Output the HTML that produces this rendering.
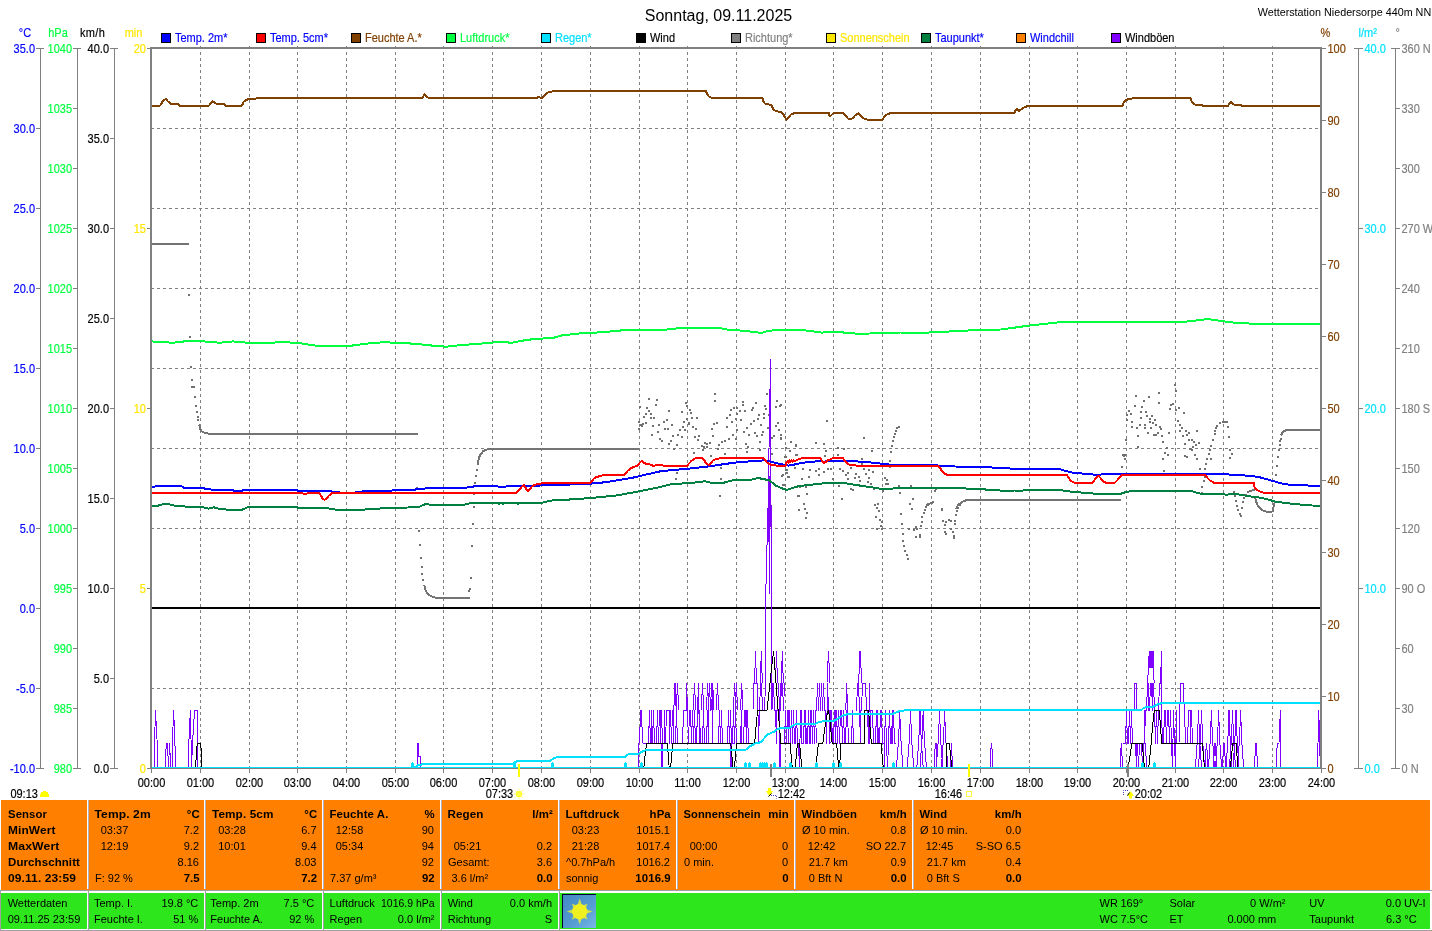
<!DOCTYPE html>
<html lang="de"><head><meta charset="utf-8"><title>Wetterstation Niedersorpe</title>
<style>html,body{margin:0;padding:0;background:#fff;overflow:hidden}body{width:1432px;height:931px;position:relative}</style></head>
<body>
<svg width="1432" height="931" viewBox="0 0 1432 931" style="position:absolute;left:0;top:0">
<defs><filter id="idf" filterUnits="userSpaceOnUse" x="0" y="0" width="1432" height="931" color-interpolation-filters="sRGB"><feOffset dx="0" dy="0"/></filter></defs>
<g filter="url(#idf)">
<rect width="1432" height="931" fill="#fff"/>
<text x="718.5" y="21" font-size="16" text-anchor="middle" font-family="Liberation Sans, Arial, sans-serif" fill="#000">Sonntag, 09.11.2025</text>
<text x="1431.2" y="16" font-size="11.01" text-anchor="end" textLength="173.5" lengthAdjust="spacingAndGlyphs" font-family="Liberation Sans, Arial, sans-serif" fill="#000">Wetterstation Niedersorpe 440m NN</text>
<rect x="161.5" y="33.5" width="9" height="9" fill="#0000ff" stroke="#000" stroke-width="1"/>
<text transform="scale(0.889,1)" x="196.85" y="42" font-size="12.375" font-family="Liberation Sans, Arial, sans-serif" fill="#0000ff" stroke="#0000ff" stroke-width="0.18">Temp. 2m*</text>
<rect x="256.5" y="33.5" width="9" height="9" fill="#ff0000" stroke="#000" stroke-width="1"/>
<text transform="scale(0.889,1)" x="303.71" y="42" font-size="12.375" font-family="Liberation Sans, Arial, sans-serif" fill="#0000ff" stroke="#0000ff" stroke-width="0.18">Temp. 5cm*</text>
<rect x="351.5" y="33.5" width="9" height="9" fill="#804000" stroke="#000" stroke-width="1"/>
<text transform="scale(0.889,1)" x="410.57" y="42" font-size="12.375" font-family="Liberation Sans, Arial, sans-serif" fill="#804000" stroke="#804000" stroke-width="0.18">Feuchte A.*</text>
<rect x="446.5" y="33.5" width="9" height="9" fill="#00ff40" stroke="#000" stroke-width="1"/>
<text transform="scale(0.889,1)" x="517.44" y="42" font-size="12.375" font-family="Liberation Sans, Arial, sans-serif" fill="#00ff40" stroke="#00ff40" stroke-width="0.18">Luftdruck*</text>
<rect x="541.5" y="33.5" width="9" height="9" fill="#00e0ff" stroke="#000" stroke-width="1"/>
<text transform="scale(0.889,1)" x="624.30" y="42" font-size="12.375" font-family="Liberation Sans, Arial, sans-serif" fill="#00e0ff" stroke="#00e0ff" stroke-width="0.18">Regen*</text>
<rect x="636.5" y="33.5" width="9" height="9" fill="#000000" stroke="#000" stroke-width="1"/>
<text transform="scale(0.889,1)" x="731.16" y="42" font-size="12.375" font-family="Liberation Sans, Arial, sans-serif" fill="#000000" stroke="#000000" stroke-width="0.18">Wind</text>
<rect x="731.5" y="33.5" width="9" height="9" fill="#808080" stroke="#000" stroke-width="1"/>
<text transform="scale(0.889,1)" x="838.02" y="42" font-size="12.375" font-family="Liberation Sans, Arial, sans-serif" fill="#808080" stroke="#808080" stroke-width="0.18">Richtung*</text>
<rect x="826.5" y="33.5" width="9" height="9" fill="#ffe600" stroke="#000" stroke-width="1"/>
<text transform="scale(0.889,1)" x="944.88" y="42" font-size="12.375" font-family="Liberation Sans, Arial, sans-serif" fill="#ffe600" stroke="#ffe600" stroke-width="0.18">Sonnenschein</text>
<rect x="921.5" y="33.5" width="9" height="9" fill="#008040" stroke="#000" stroke-width="1"/>
<text transform="scale(0.889,1)" x="1051.74" y="42" font-size="12.375" font-family="Liberation Sans, Arial, sans-serif" fill="#0000ff" stroke="#0000ff" stroke-width="0.18">Taupunkt*</text>
<rect x="1016.5" y="33.5" width="9" height="9" fill="#ff8000" stroke="#000" stroke-width="1"/>
<text transform="scale(0.889,1)" x="1158.61" y="42" font-size="12.375" font-family="Liberation Sans, Arial, sans-serif" fill="#0000ff" stroke="#0000ff" stroke-width="0.18">Windchill</text>
<rect x="1111.5" y="33.5" width="9" height="9" fill="#8000ff" stroke="#000" stroke-width="1"/>
<text transform="scale(0.889,1)" x="1265.47" y="42" font-size="12.375" font-family="Liberation Sans, Arial, sans-serif" fill="#000000" stroke="#000000" stroke-width="0.18">Windböen</text>
<g stroke="#808080" stroke-width="1" stroke-dasharray="3 3" shape-rendering="crispEdges">
<line x1="200.5" y1="46" x2="200.5" y2="767"/>
<line x1="249.5" y1="46" x2="249.5" y2="767"/>
<line x1="297.5" y1="46" x2="297.5" y2="767"/>
<line x1="346.5" y1="46" x2="346.5" y2="767"/>
<line x1="395.5" y1="46" x2="395.5" y2="767"/>
<line x1="443.5" y1="46" x2="443.5" y2="767"/>
<line x1="492.5" y1="46" x2="492.5" y2="767"/>
<line x1="541.5" y1="46" x2="541.5" y2="767"/>
<line x1="590.5" y1="46" x2="590.5" y2="767"/>
<line x1="639.5" y1="46" x2="639.5" y2="767"/>
<line x1="687.5" y1="46" x2="687.5" y2="767"/>
<line x1="736.5" y1="46" x2="736.5" y2="767"/>
<line x1="785.5" y1="46" x2="785.5" y2="767"/>
<line x1="833.5" y1="46" x2="833.5" y2="767"/>
<line x1="882.5" y1="46" x2="882.5" y2="767"/>
<line x1="931.5" y1="46" x2="931.5" y2="767"/>
<line x1="980.5" y1="46" x2="980.5" y2="767"/>
<line x1="1029.5" y1="46" x2="1029.5" y2="767"/>
<line x1="1077.5" y1="46" x2="1077.5" y2="767"/>
<line x1="1126.5" y1="46" x2="1126.5" y2="767"/>
<line x1="1175.5" y1="46" x2="1175.5" y2="767"/>
<line x1="1223.5" y1="46" x2="1223.5" y2="767"/>
<line x1="1272.5" y1="46" x2="1272.5" y2="767"/>
<line x1="151" y1="128.5" x2="1320" y2="128.5"/>
<line x1="151" y1="208.5" x2="1320" y2="208.5"/>
<line x1="151" y1="288.5" x2="1320" y2="288.5"/>
<line x1="151" y1="368.5" x2="1320" y2="368.5"/>
<line x1="151" y1="448.5" x2="1320" y2="448.5"/>
<line x1="151" y1="528.5" x2="1320" y2="528.5"/>
<line x1="151" y1="688.5" x2="1320" y2="688.5"/>
</g>
<line x1="152" y1="608" x2="1320" y2="608" stroke="#000" stroke-width="2" shape-rendering="crispEdges"/>
<g stroke="#808080" stroke-width="1" shape-rendering="crispEdges">
<line x1="40.5" y1="48" x2="40.5" y2="769"/>
<line x1="36" y1="48.5" x2="44" y2="48.5"/>
<line x1="36" y1="128.5" x2="40" y2="128.5"/>
<line x1="36" y1="208.5" x2="40" y2="208.5"/>
<line x1="36" y1="288.5" x2="40" y2="288.5"/>
<line x1="36" y1="368.5" x2="40" y2="368.5"/>
<line x1="36" y1="448.5" x2="40" y2="448.5"/>
<line x1="36" y1="528.5" x2="40" y2="528.5"/>
<line x1="36" y1="608.5" x2="40" y2="608.5"/>
<line x1="36" y1="688.5" x2="40" y2="688.5"/>
<line x1="36" y1="768.5" x2="44" y2="768.5"/>
</g>
<text transform="scale(0.889,1)" x="39.37" y="53" font-size="12.375" text-anchor="end" font-family="Liberation Sans, Arial, sans-serif" fill="#0000ff" stroke="#0000ff" stroke-width="0.18">35.0</text>
<text transform="scale(0.889,1)" x="39.37" y="133" font-size="12.375" text-anchor="end" font-family="Liberation Sans, Arial, sans-serif" fill="#0000ff" stroke="#0000ff" stroke-width="0.18">30.0</text>
<text transform="scale(0.889,1)" x="39.37" y="213" font-size="12.375" text-anchor="end" font-family="Liberation Sans, Arial, sans-serif" fill="#0000ff" stroke="#0000ff" stroke-width="0.18">25.0</text>
<text transform="scale(0.889,1)" x="39.37" y="293" font-size="12.375" text-anchor="end" font-family="Liberation Sans, Arial, sans-serif" fill="#0000ff" stroke="#0000ff" stroke-width="0.18">20.0</text>
<text transform="scale(0.889,1)" x="39.37" y="373" font-size="12.375" text-anchor="end" font-family="Liberation Sans, Arial, sans-serif" fill="#0000ff" stroke="#0000ff" stroke-width="0.18">15.0</text>
<text transform="scale(0.889,1)" x="39.37" y="453" font-size="12.375" text-anchor="end" font-family="Liberation Sans, Arial, sans-serif" fill="#0000ff" stroke="#0000ff" stroke-width="0.18">10.0</text>
<text transform="scale(0.889,1)" x="39.37" y="533" font-size="12.375" text-anchor="end" font-family="Liberation Sans, Arial, sans-serif" fill="#0000ff" stroke="#0000ff" stroke-width="0.18">5.0</text>
<text transform="scale(0.889,1)" x="39.37" y="613" font-size="12.375" text-anchor="end" font-family="Liberation Sans, Arial, sans-serif" fill="#0000ff" stroke="#0000ff" stroke-width="0.18">0.0</text>
<text transform="scale(0.889,1)" x="39.37" y="693" font-size="12.375" text-anchor="end" font-family="Liberation Sans, Arial, sans-serif" fill="#0000ff" stroke="#0000ff" stroke-width="0.18">-5.0</text>
<text transform="scale(0.889,1)" x="39.37" y="773" font-size="12.375" text-anchor="end" font-family="Liberation Sans, Arial, sans-serif" fill="#0000ff" stroke="#0000ff" stroke-width="0.18">-10.0</text>
<g stroke="#808080" stroke-width="1" shape-rendering="crispEdges">
<line x1="77.5" y1="48" x2="77.5" y2="769"/>
<line x1="73" y1="48.5" x2="81" y2="48.5"/>
<line x1="73" y1="108.5" x2="77" y2="108.5"/>
<line x1="73" y1="168.5" x2="77" y2="168.5"/>
<line x1="73" y1="228.5" x2="77" y2="228.5"/>
<line x1="73" y1="288.5" x2="77" y2="288.5"/>
<line x1="73" y1="348.5" x2="77" y2="348.5"/>
<line x1="73" y1="408.5" x2="77" y2="408.5"/>
<line x1="73" y1="468.5" x2="77" y2="468.5"/>
<line x1="73" y1="528.5" x2="77" y2="528.5"/>
<line x1="73" y1="588.5" x2="77" y2="588.5"/>
<line x1="73" y1="648.5" x2="77" y2="648.5"/>
<line x1="73" y1="708.5" x2="77" y2="708.5"/>
<line x1="73" y1="768.5" x2="81" y2="768.5"/>
</g>
<text transform="scale(0.889,1)" x="80.99" y="53" font-size="12.375" text-anchor="end" font-family="Liberation Sans, Arial, sans-serif" fill="#00ff40" stroke="#00ff40" stroke-width="0.18">1040</text>
<text transform="scale(0.889,1)" x="80.99" y="113" font-size="12.375" text-anchor="end" font-family="Liberation Sans, Arial, sans-serif" fill="#00ff40" stroke="#00ff40" stroke-width="0.18">1035</text>
<text transform="scale(0.889,1)" x="80.99" y="173" font-size="12.375" text-anchor="end" font-family="Liberation Sans, Arial, sans-serif" fill="#00ff40" stroke="#00ff40" stroke-width="0.18">1030</text>
<text transform="scale(0.889,1)" x="80.99" y="233" font-size="12.375" text-anchor="end" font-family="Liberation Sans, Arial, sans-serif" fill="#00ff40" stroke="#00ff40" stroke-width="0.18">1025</text>
<text transform="scale(0.889,1)" x="80.99" y="293" font-size="12.375" text-anchor="end" font-family="Liberation Sans, Arial, sans-serif" fill="#00ff40" stroke="#00ff40" stroke-width="0.18">1020</text>
<text transform="scale(0.889,1)" x="80.99" y="353" font-size="12.375" text-anchor="end" font-family="Liberation Sans, Arial, sans-serif" fill="#00ff40" stroke="#00ff40" stroke-width="0.18">1015</text>
<text transform="scale(0.889,1)" x="80.99" y="413" font-size="12.375" text-anchor="end" font-family="Liberation Sans, Arial, sans-serif" fill="#00ff40" stroke="#00ff40" stroke-width="0.18">1010</text>
<text transform="scale(0.889,1)" x="80.99" y="473" font-size="12.375" text-anchor="end" font-family="Liberation Sans, Arial, sans-serif" fill="#00ff40" stroke="#00ff40" stroke-width="0.18">1005</text>
<text transform="scale(0.889,1)" x="80.99" y="533" font-size="12.375" text-anchor="end" font-family="Liberation Sans, Arial, sans-serif" fill="#00ff40" stroke="#00ff40" stroke-width="0.18">1000</text>
<text transform="scale(0.889,1)" x="80.99" y="593" font-size="12.375" text-anchor="end" font-family="Liberation Sans, Arial, sans-serif" fill="#00ff40" stroke="#00ff40" stroke-width="0.18">995</text>
<text transform="scale(0.889,1)" x="80.99" y="653" font-size="12.375" text-anchor="end" font-family="Liberation Sans, Arial, sans-serif" fill="#00ff40" stroke="#00ff40" stroke-width="0.18">990</text>
<text transform="scale(0.889,1)" x="80.99" y="713" font-size="12.375" text-anchor="end" font-family="Liberation Sans, Arial, sans-serif" fill="#00ff40" stroke="#00ff40" stroke-width="0.18">985</text>
<text transform="scale(0.889,1)" x="80.99" y="773" font-size="12.375" text-anchor="end" font-family="Liberation Sans, Arial, sans-serif" fill="#00ff40" stroke="#00ff40" stroke-width="0.18">980</text>
<g stroke="#808080" stroke-width="1" shape-rendering="crispEdges">
<line x1="114.5" y1="48" x2="114.5" y2="769"/>
<line x1="110" y1="48.5" x2="118" y2="48.5"/>
<line x1="110" y1="138.5" x2="114" y2="138.5"/>
<line x1="110" y1="228.5" x2="114" y2="228.5"/>
<line x1="110" y1="318.5" x2="114" y2="318.5"/>
<line x1="110" y1="408.5" x2="114" y2="408.5"/>
<line x1="110" y1="498.5" x2="114" y2="498.5"/>
<line x1="110" y1="588.5" x2="114" y2="588.5"/>
<line x1="110" y1="678.5" x2="114" y2="678.5"/>
<line x1="110" y1="768.5" x2="118" y2="768.5"/>
</g>
<text transform="scale(0.889,1)" x="122.61" y="53" font-size="12.375" text-anchor="end" font-family="Liberation Sans, Arial, sans-serif" fill="#000000" stroke="#000000" stroke-width="0.18">40.0</text>
<text transform="scale(0.889,1)" x="122.61" y="143" font-size="12.375" text-anchor="end" font-family="Liberation Sans, Arial, sans-serif" fill="#000000" stroke="#000000" stroke-width="0.18">35.0</text>
<text transform="scale(0.889,1)" x="122.61" y="233" font-size="12.375" text-anchor="end" font-family="Liberation Sans, Arial, sans-serif" fill="#000000" stroke="#000000" stroke-width="0.18">30.0</text>
<text transform="scale(0.889,1)" x="122.61" y="323" font-size="12.375" text-anchor="end" font-family="Liberation Sans, Arial, sans-serif" fill="#000000" stroke="#000000" stroke-width="0.18">25.0</text>
<text transform="scale(0.889,1)" x="122.61" y="413" font-size="12.375" text-anchor="end" font-family="Liberation Sans, Arial, sans-serif" fill="#000000" stroke="#000000" stroke-width="0.18">20.0</text>
<text transform="scale(0.889,1)" x="122.61" y="503" font-size="12.375" text-anchor="end" font-family="Liberation Sans, Arial, sans-serif" fill="#000000" stroke="#000000" stroke-width="0.18">15.0</text>
<text transform="scale(0.889,1)" x="122.61" y="593" font-size="12.375" text-anchor="end" font-family="Liberation Sans, Arial, sans-serif" fill="#000000" stroke="#000000" stroke-width="0.18">10.0</text>
<text transform="scale(0.889,1)" x="122.61" y="683" font-size="12.375" text-anchor="end" font-family="Liberation Sans, Arial, sans-serif" fill="#000000" stroke="#000000" stroke-width="0.18">5.0</text>
<text transform="scale(0.889,1)" x="122.61" y="773" font-size="12.375" text-anchor="end" font-family="Liberation Sans, Arial, sans-serif" fill="#000000" stroke="#000000" stroke-width="0.18">0.0</text>
<g stroke="#808080" stroke-width="1" shape-rendering="crispEdges">
<line x1="147" y1="48.5" x2="150" y2="48.5"/>
<line x1="147" y1="228.5" x2="150" y2="228.5"/>
<line x1="147" y1="408.5" x2="150" y2="408.5"/>
<line x1="147" y1="588.5" x2="150" y2="588.5"/>
<line x1="147" y1="768.5" x2="150" y2="768.5"/>
</g>
<text transform="scale(0.889,1)" x="164.23" y="53" font-size="12.375" text-anchor="end" font-family="Liberation Sans, Arial, sans-serif" fill="#ffe600" stroke="#ffe600" stroke-width="0.18">20</text>
<text transform="scale(0.889,1)" x="164.23" y="233" font-size="12.375" text-anchor="end" font-family="Liberation Sans, Arial, sans-serif" fill="#ffe600" stroke="#ffe600" stroke-width="0.18">15</text>
<text transform="scale(0.889,1)" x="164.23" y="413" font-size="12.375" text-anchor="end" font-family="Liberation Sans, Arial, sans-serif" fill="#ffe600" stroke="#ffe600" stroke-width="0.18">10</text>
<text transform="scale(0.889,1)" x="164.23" y="593" font-size="12.375" text-anchor="end" font-family="Liberation Sans, Arial, sans-serif" fill="#ffe600" stroke="#ffe600" stroke-width="0.18">5</text>
<text transform="scale(0.889,1)" x="164.23" y="773" font-size="12.375" text-anchor="end" font-family="Liberation Sans, Arial, sans-serif" fill="#ffe600" stroke="#ffe600" stroke-width="0.18">0</text>
<text transform="scale(0.889,1)" x="28.12" y="37" font-size="12.375" text-anchor="middle" font-family="Liberation Sans, Arial, sans-serif" fill="#0000ff" stroke="#0000ff" stroke-width="0.18">°C</text>
<text transform="scale(0.889,1)" x="65.24" y="37" font-size="12.375" text-anchor="middle" font-family="Liberation Sans, Arial, sans-serif" fill="#00ff40" stroke="#00ff40" stroke-width="0.18">hPa</text>
<text transform="scale(0.889,1)" x="104.05" y="37" font-size="12.375" text-anchor="middle" letter-spacing="0.4" font-family="Liberation Sans, Arial, sans-serif" fill="#000" stroke="#000" stroke-width="0.18">km/h</text>
<text transform="scale(0.889,1)" x="150.17" y="37" font-size="12.375" text-anchor="middle" font-family="Liberation Sans, Arial, sans-serif" fill="#ffe600" stroke="#ffe600" stroke-width="0.18">min</text>
<g stroke="#808080" stroke-width="1" shape-rendering="crispEdges">
<line x1="1322" y1="48.5" x2="1326" y2="48.5"/>
<line x1="1322" y1="120.5" x2="1326" y2="120.5"/>
<line x1="1322" y1="192.5" x2="1326" y2="192.5"/>
<line x1="1322" y1="264.5" x2="1326" y2="264.5"/>
<line x1="1322" y1="336.5" x2="1326" y2="336.5"/>
<line x1="1322" y1="408.5" x2="1326" y2="408.5"/>
<line x1="1322" y1="480.5" x2="1326" y2="480.5"/>
<line x1="1322" y1="552.5" x2="1326" y2="552.5"/>
<line x1="1322" y1="624.5" x2="1326" y2="624.5"/>
<line x1="1322" y1="696.5" x2="1326" y2="696.5"/>
<line x1="1322" y1="768.5" x2="1326" y2="768.5"/>
</g>
<text transform="scale(0.889,1)" x="1493.25" y="53" font-size="12.375" font-family="Liberation Sans, Arial, sans-serif" fill="#804000" stroke="#804000" stroke-width="0.18">100</text>
<text transform="scale(0.889,1)" x="1493.25" y="125" font-size="12.375" font-family="Liberation Sans, Arial, sans-serif" fill="#804000" stroke="#804000" stroke-width="0.18">90</text>
<text transform="scale(0.889,1)" x="1493.25" y="197" font-size="12.375" font-family="Liberation Sans, Arial, sans-serif" fill="#804000" stroke="#804000" stroke-width="0.18">80</text>
<text transform="scale(0.889,1)" x="1493.25" y="269" font-size="12.375" font-family="Liberation Sans, Arial, sans-serif" fill="#804000" stroke="#804000" stroke-width="0.18">70</text>
<text transform="scale(0.889,1)" x="1493.25" y="341" font-size="12.375" font-family="Liberation Sans, Arial, sans-serif" fill="#804000" stroke="#804000" stroke-width="0.18">60</text>
<text transform="scale(0.889,1)" x="1493.25" y="413" font-size="12.375" font-family="Liberation Sans, Arial, sans-serif" fill="#804000" stroke="#804000" stroke-width="0.18">50</text>
<text transform="scale(0.889,1)" x="1493.25" y="485" font-size="12.375" font-family="Liberation Sans, Arial, sans-serif" fill="#804000" stroke="#804000" stroke-width="0.18">40</text>
<text transform="scale(0.889,1)" x="1493.25" y="557" font-size="12.375" font-family="Liberation Sans, Arial, sans-serif" fill="#804000" stroke="#804000" stroke-width="0.18">30</text>
<text transform="scale(0.889,1)" x="1493.25" y="629" font-size="12.375" font-family="Liberation Sans, Arial, sans-serif" fill="#804000" stroke="#804000" stroke-width="0.18">20</text>
<text transform="scale(0.889,1)" x="1493.25" y="701" font-size="12.375" font-family="Liberation Sans, Arial, sans-serif" fill="#804000" stroke="#804000" stroke-width="0.18">10</text>
<text transform="scale(0.889,1)" x="1493.25" y="773" font-size="12.375" font-family="Liberation Sans, Arial, sans-serif" fill="#804000" stroke="#804000" stroke-width="0.18">0</text>
<g stroke="#808080" stroke-width="1" shape-rendering="crispEdges">
<line x1="1358.5" y1="48" x2="1358.5" y2="769"/>
<line x1="1354" y1="48.5" x2="1363" y2="48.5"/>
<line x1="1358" y1="228.5" x2="1363" y2="228.5"/>
<line x1="1358" y1="408.5" x2="1363" y2="408.5"/>
<line x1="1358" y1="588.5" x2="1363" y2="588.5"/>
<line x1="1354" y1="768.5" x2="1363" y2="768.5"/>
</g>
<text transform="scale(0.889,1)" x="1534.87" y="53" font-size="12.375" font-family="Liberation Sans, Arial, sans-serif" fill="#00e0ff" stroke="#00e0ff" stroke-width="0.18">40.0</text>
<text transform="scale(0.889,1)" x="1534.87" y="233" font-size="12.375" font-family="Liberation Sans, Arial, sans-serif" fill="#00e0ff" stroke="#00e0ff" stroke-width="0.18">30.0</text>
<text transform="scale(0.889,1)" x="1534.87" y="413" font-size="12.375" font-family="Liberation Sans, Arial, sans-serif" fill="#00e0ff" stroke="#00e0ff" stroke-width="0.18">20.0</text>
<text transform="scale(0.889,1)" x="1534.87" y="593" font-size="12.375" font-family="Liberation Sans, Arial, sans-serif" fill="#00e0ff" stroke="#00e0ff" stroke-width="0.18">10.0</text>
<text transform="scale(0.889,1)" x="1534.87" y="773" font-size="12.375" font-family="Liberation Sans, Arial, sans-serif" fill="#00e0ff" stroke="#00e0ff" stroke-width="0.18">0.0</text>
<g stroke="#808080" stroke-width="1" shape-rendering="crispEdges">
<line x1="1395.5" y1="48" x2="1395.5" y2="769"/>
<line x1="1391" y1="48.5" x2="1400" y2="48.5"/>
<line x1="1395" y1="108.5" x2="1400" y2="108.5"/>
<line x1="1395" y1="168.5" x2="1400" y2="168.5"/>
<line x1="1395" y1="228.5" x2="1400" y2="228.5"/>
<line x1="1395" y1="288.5" x2="1400" y2="288.5"/>
<line x1="1395" y1="348.5" x2="1400" y2="348.5"/>
<line x1="1395" y1="408.5" x2="1400" y2="408.5"/>
<line x1="1395" y1="468.5" x2="1400" y2="468.5"/>
<line x1="1395" y1="528.5" x2="1400" y2="528.5"/>
<line x1="1395" y1="588.5" x2="1400" y2="588.5"/>
<line x1="1395" y1="648.5" x2="1400" y2="648.5"/>
<line x1="1395" y1="708.5" x2="1400" y2="708.5"/>
<line x1="1391" y1="768.5" x2="1400" y2="768.5"/>
</g>
<text transform="scale(0.889,1)" x="1576.49" y="53" font-size="12.375" font-family="Liberation Sans, Arial, sans-serif" fill="#808080" stroke="#808080" stroke-width="0.18">360 N</text>
<text transform="scale(0.889,1)" x="1576.49" y="113" font-size="12.375" font-family="Liberation Sans, Arial, sans-serif" fill="#808080" stroke="#808080" stroke-width="0.18">330</text>
<text transform="scale(0.889,1)" x="1576.49" y="173" font-size="12.375" font-family="Liberation Sans, Arial, sans-serif" fill="#808080" stroke="#808080" stroke-width="0.18">300</text>
<text transform="scale(0.889,1)" x="1576.49" y="233" font-size="12.375" font-family="Liberation Sans, Arial, sans-serif" fill="#808080" stroke="#808080" stroke-width="0.18">270 W</text>
<text transform="scale(0.889,1)" x="1576.49" y="293" font-size="12.375" font-family="Liberation Sans, Arial, sans-serif" fill="#808080" stroke="#808080" stroke-width="0.18">240</text>
<text transform="scale(0.889,1)" x="1576.49" y="353" font-size="12.375" font-family="Liberation Sans, Arial, sans-serif" fill="#808080" stroke="#808080" stroke-width="0.18">210</text>
<text transform="scale(0.889,1)" x="1576.49" y="413" font-size="12.375" font-family="Liberation Sans, Arial, sans-serif" fill="#808080" stroke="#808080" stroke-width="0.18">180 S</text>
<text transform="scale(0.889,1)" x="1576.49" y="473" font-size="12.375" font-family="Liberation Sans, Arial, sans-serif" fill="#808080" stroke="#808080" stroke-width="0.18">150</text>
<text transform="scale(0.889,1)" x="1576.49" y="533" font-size="12.375" font-family="Liberation Sans, Arial, sans-serif" fill="#808080" stroke="#808080" stroke-width="0.18">120</text>
<text transform="scale(0.889,1)" x="1576.49" y="593" font-size="12.375" font-family="Liberation Sans, Arial, sans-serif" fill="#808080" stroke="#808080" stroke-width="0.18">90 O</text>
<text transform="scale(0.889,1)" x="1576.49" y="653" font-size="12.375" font-family="Liberation Sans, Arial, sans-serif" fill="#808080" stroke="#808080" stroke-width="0.18">60</text>
<text transform="scale(0.889,1)" x="1576.49" y="713" font-size="12.375" font-family="Liberation Sans, Arial, sans-serif" fill="#808080" stroke="#808080" stroke-width="0.18">30</text>
<text transform="scale(0.889,1)" x="1576.49" y="773" font-size="12.375" font-family="Liberation Sans, Arial, sans-serif" fill="#808080" stroke="#808080" stroke-width="0.18">0 N</text>
<text transform="scale(0.889,1)" x="1491.00" y="37" font-size="12.375" text-anchor="middle" font-family="Liberation Sans, Arial, sans-serif" fill="#804000" stroke="#804000" stroke-width="0.18">%</text>
<text transform="scale(0.889,1)" x="1528.12" y="37" font-size="12.375" font-family="Liberation Sans, Arial, sans-serif" fill="#00e0ff" stroke="#00e0ff" stroke-width="0.18">l/m²</text>
<text transform="scale(0.889,1)" x="1569.74" y="37" font-size="12.375" font-family="Liberation Sans, Arial, sans-serif" fill="#808080" stroke="#808080" stroke-width="0.18">°</text>
<g stroke="#808080" stroke-width="1" shape-rendering="crispEdges">
<line x1="151.5" y1="769" x2="151.5" y2="773"/>
<line x1="200.5" y1="769" x2="200.5" y2="773"/>
<line x1="249.5" y1="769" x2="249.5" y2="773"/>
<line x1="297.5" y1="769" x2="297.5" y2="773"/>
<line x1="346.5" y1="769" x2="346.5" y2="773"/>
<line x1="395.5" y1="769" x2="395.5" y2="773"/>
<line x1="443.5" y1="769" x2="443.5" y2="773"/>
<line x1="492.5" y1="769" x2="492.5" y2="773"/>
<line x1="541.5" y1="769" x2="541.5" y2="773"/>
<line x1="590.5" y1="769" x2="590.5" y2="773"/>
<line x1="639.5" y1="769" x2="639.5" y2="773"/>
<line x1="687.5" y1="769" x2="687.5" y2="773"/>
<line x1="736.5" y1="769" x2="736.5" y2="773"/>
<line x1="785.5" y1="769" x2="785.5" y2="773"/>
<line x1="833.5" y1="769" x2="833.5" y2="773"/>
<line x1="882.5" y1="769" x2="882.5" y2="773"/>
<line x1="931.5" y1="769" x2="931.5" y2="773"/>
<line x1="980.5" y1="769" x2="980.5" y2="773"/>
<line x1="1029.5" y1="769" x2="1029.5" y2="773"/>
<line x1="1077.5" y1="769" x2="1077.5" y2="773"/>
<line x1="1126.5" y1="769" x2="1126.5" y2="773"/>
<line x1="1175.5" y1="769" x2="1175.5" y2="773"/>
<line x1="1223.5" y1="769" x2="1223.5" y2="773"/>
<line x1="1272.5" y1="769" x2="1272.5" y2="773"/>
<line x1="1321.5" y1="769" x2="1321.5" y2="773"/>
</g>
<text transform="scale(0.889,1)" x="170.42" y="787" font-size="12.375" text-anchor="middle" font-family="Liberation Sans, Arial, sans-serif" fill="#000" stroke="#000" stroke-width="0.18">00:00</text>
<text transform="scale(0.889,1)" x="225.53" y="787" font-size="12.375" text-anchor="middle" font-family="Liberation Sans, Arial, sans-serif" fill="#000" stroke="#000" stroke-width="0.18">01:00</text>
<text transform="scale(0.889,1)" x="280.65" y="787" font-size="12.375" text-anchor="middle" font-family="Liberation Sans, Arial, sans-serif" fill="#000" stroke="#000" stroke-width="0.18">02:00</text>
<text transform="scale(0.889,1)" x="334.65" y="787" font-size="12.375" text-anchor="middle" font-family="Liberation Sans, Arial, sans-serif" fill="#000" stroke="#000" stroke-width="0.18">03:00</text>
<text transform="scale(0.889,1)" x="389.76" y="787" font-size="12.375" text-anchor="middle" font-family="Liberation Sans, Arial, sans-serif" fill="#000" stroke="#000" stroke-width="0.18">04:00</text>
<text transform="scale(0.889,1)" x="444.88" y="787" font-size="12.375" text-anchor="middle" font-family="Liberation Sans, Arial, sans-serif" fill="#000" stroke="#000" stroke-width="0.18">05:00</text>
<text transform="scale(0.889,1)" x="498.88" y="787" font-size="12.375" text-anchor="middle" font-family="Liberation Sans, Arial, sans-serif" fill="#000" stroke="#000" stroke-width="0.18">06:00</text>
<text transform="scale(0.889,1)" x="553.99" y="787" font-size="12.375" text-anchor="middle" font-family="Liberation Sans, Arial, sans-serif" fill="#000" stroke="#000" stroke-width="0.18">07:00</text>
<text transform="scale(0.889,1)" x="609.11" y="787" font-size="12.375" text-anchor="middle" font-family="Liberation Sans, Arial, sans-serif" fill="#000" stroke="#000" stroke-width="0.18">08:00</text>
<text transform="scale(0.889,1)" x="664.23" y="787" font-size="12.375" text-anchor="middle" font-family="Liberation Sans, Arial, sans-serif" fill="#000" stroke="#000" stroke-width="0.18">09:00</text>
<text transform="scale(0.889,1)" x="719.35" y="787" font-size="12.375" text-anchor="middle" font-family="Liberation Sans, Arial, sans-serif" fill="#000" stroke="#000" stroke-width="0.18">10:00</text>
<text transform="scale(0.889,1)" x="773.34" y="787" font-size="12.375" text-anchor="middle" font-family="Liberation Sans, Arial, sans-serif" fill="#000" stroke="#000" stroke-width="0.18">11:00</text>
<text transform="scale(0.889,1)" x="828.46" y="787" font-size="12.375" text-anchor="middle" font-family="Liberation Sans, Arial, sans-serif" fill="#000" stroke="#000" stroke-width="0.18">12:00</text>
<text transform="scale(0.889,1)" x="883.58" y="787" font-size="12.375" text-anchor="middle" font-family="Liberation Sans, Arial, sans-serif" fill="#000" stroke="#000" stroke-width="0.18">13:00</text>
<text transform="scale(0.889,1)" x="937.57" y="787" font-size="12.375" text-anchor="middle" font-family="Liberation Sans, Arial, sans-serif" fill="#000" stroke="#000" stroke-width="0.18">14:00</text>
<text transform="scale(0.889,1)" x="992.69" y="787" font-size="12.375" text-anchor="middle" font-family="Liberation Sans, Arial, sans-serif" fill="#000" stroke="#000" stroke-width="0.18">15:00</text>
<text transform="scale(0.889,1)" x="1047.81" y="787" font-size="12.375" text-anchor="middle" font-family="Liberation Sans, Arial, sans-serif" fill="#000" stroke="#000" stroke-width="0.18">16:00</text>
<text transform="scale(0.889,1)" x="1102.92" y="787" font-size="12.375" text-anchor="middle" font-family="Liberation Sans, Arial, sans-serif" fill="#000" stroke="#000" stroke-width="0.18">17:00</text>
<text transform="scale(0.889,1)" x="1158.04" y="787" font-size="12.375" text-anchor="middle" font-family="Liberation Sans, Arial, sans-serif" fill="#000" stroke="#000" stroke-width="0.18">18:00</text>
<text transform="scale(0.889,1)" x="1212.04" y="787" font-size="12.375" text-anchor="middle" font-family="Liberation Sans, Arial, sans-serif" fill="#000" stroke="#000" stroke-width="0.18">19:00</text>
<text transform="scale(0.889,1)" x="1267.15" y="787" font-size="12.375" text-anchor="middle" font-family="Liberation Sans, Arial, sans-serif" fill="#000" stroke="#000" stroke-width="0.18">20:00</text>
<text transform="scale(0.889,1)" x="1322.27" y="787" font-size="12.375" text-anchor="middle" font-family="Liberation Sans, Arial, sans-serif" fill="#000" stroke="#000" stroke-width="0.18">21:00</text>
<text transform="scale(0.889,1)" x="1376.27" y="787" font-size="12.375" text-anchor="middle" font-family="Liberation Sans, Arial, sans-serif" fill="#000" stroke="#000" stroke-width="0.18">22:00</text>
<text transform="scale(0.889,1)" x="1431.38" y="787" font-size="12.375" text-anchor="middle" font-family="Liberation Sans, Arial, sans-serif" fill="#000" stroke="#000" stroke-width="0.18">23:00</text>
<text transform="scale(0.889,1)" x="1486.50" y="787" font-size="12.375" text-anchor="middle" font-family="Liberation Sans, Arial, sans-serif" fill="#000" stroke="#000" stroke-width="0.18">24:00</text>
<g fill="none" stroke-linejoin="round" shape-rendering="crispEdges">
<polyline points="152.0,243.7 189.0,243.7" stroke="#747474" stroke-width="2"/>
<polyline points="199.1,424.5 200.0,428.0 201.0,430.9 204.0,432.5 209.0,433.7 417.7,433.7" stroke="#747474" stroke-width="2"/>
<polyline points="424.2,584.6 425.1,588.5 426.0,591.4 428.0,594.0 430.9,596.2 434.8,597.5 469.6,597.5" stroke="#747474" stroke-width="2"/>
<polyline points="477.9,464.8 478.6,459.0 480.2,454.7 483.1,451.3 487.0,449.4 639.0,449.4" stroke="#747474" stroke-width="2"/>
<polyline points="956.0,509.0 958.0,505.0 962.0,502.0 966.0,500.2 1120.7,500.2" stroke="#747474" stroke-width="2"/>
<polyline points="1255.2,497.2 1256.1,501.5 1257.8,505.8 1260.4,508.9 1263.8,510.9 1268.1,512.0 1272.4,512.0" stroke="#747474" stroke-width="2"/>
<polyline points="1272.4,512.0 1273.3,507.5 1274.1,504.9 1274.7,502.0" stroke="#747474" stroke-width="2"/>
<polyline points="1247.5,492.4 1250.1,490.8 1253.5,490.3" stroke="#747474" stroke-width="2"/>
<polyline points="1281.0,435.3 1282.7,432.2 1285.3,430.5 1288.8,430.2 1320.0,430.2" stroke="#747474" stroke-width="2"/>
<polyline points="926.0,505.5 928.0,504.0 930.7,503.2 933.5,502.3" stroke="#747474" stroke-width="2"/>
</g>
<g fill="#707070" shape-rendering="crispEdges">
<rect x="188" y="294" width="2" height="2"/>
<rect x="189" y="336" width="2" height="2"/>
<rect x="190" y="366" width="2" height="2"/>
<rect x="191" y="379" width="2" height="2"/>
<rect x="191" y="386" width="2" height="2"/>
<rect x="193" y="386" width="2" height="2"/>
<rect x="194" y="396" width="2" height="2"/>
<rect x="195" y="405" width="2" height="2"/>
<rect x="196" y="411" width="2" height="2"/>
<rect x="197" y="416" width="2" height="2"/>
<rect x="197" y="419" width="2" height="2"/>
<rect x="416" y="487" width="2" height="2"/>
<rect x="417" y="506" width="2" height="2"/>
<rect x="418" y="530" width="2" height="2"/>
<rect x="419" y="544" width="2" height="2"/>
<rect x="420" y="557" width="2" height="2"/>
<rect x="421" y="566" width="2" height="2"/>
<rect x="421" y="573" width="2" height="2"/>
<rect x="422" y="579" width="2" height="2"/>
<rect x="468" y="590" width="2" height="2"/>
<rect x="469" y="588" width="2" height="2"/>
<rect x="470" y="577" width="2" height="2"/>
<rect x="471" y="545" width="2" height="2"/>
<rect x="472" y="523" width="2" height="2"/>
<rect x="473" y="506" width="2" height="2"/>
<rect x="473" y="493" width="2" height="2"/>
<rect x="474" y="482" width="2" height="2"/>
<rect x="475" y="475" width="2" height="2"/>
<rect x="476" y="469" width="2" height="2"/>
<rect x="648" y="398" width="2" height="2"/>
<rect x="656" y="399" width="2" height="2"/>
<rect x="655" y="404" width="2" height="2"/>
<rect x="639" y="406" width="2" height="2"/>
<rect x="646" y="407" width="2" height="2"/>
<rect x="648" y="410" width="2" height="2"/>
<rect x="645" y="413" width="2" height="2"/>
<rect x="650" y="413" width="2" height="2"/>
<rect x="643" y="416" width="2" height="2"/>
<rect x="650" y="417" width="2" height="2"/>
<rect x="653" y="417" width="2" height="2"/>
<rect x="668" y="410" width="2" height="2"/>
<rect x="638" y="421" width="2" height="2"/>
<rect x="642" y="423" width="2" height="2"/>
<rect x="645" y="422" width="2" height="2"/>
<rect x="663" y="421" width="2" height="2"/>
<rect x="666" y="419" width="2" height="2"/>
<rect x="652" y="425" width="2" height="2"/>
<rect x="658" y="424" width="2" height="2"/>
<rect x="671" y="424" width="2" height="2"/>
<rect x="664" y="428" width="2" height="2"/>
<rect x="667" y="428" width="2" height="2"/>
<rect x="657" y="431" width="2" height="2"/>
<rect x="651" y="434" width="2" height="2"/>
<rect x="672" y="435" width="2" height="2"/>
<rect x="677" y="434" width="2" height="2"/>
<rect x="681" y="436" width="2" height="2"/>
<rect x="659" y="438" width="2" height="2"/>
<rect x="661" y="440" width="2" height="2"/>
<rect x="670" y="440" width="2" height="2"/>
<rect x="668" y="443" width="2" height="2"/>
<rect x="676" y="444" width="2" height="2"/>
<rect x="673" y="448" width="2" height="2"/>
<rect x="681" y="411" width="2" height="2"/>
<rect x="685" y="402" width="2" height="2"/>
<rect x="686" y="405" width="2" height="2"/>
<rect x="689" y="409" width="2" height="2"/>
<rect x="690" y="412" width="2" height="2"/>
<rect x="691" y="417" width="2" height="2"/>
<rect x="696" y="417" width="2" height="2"/>
<rect x="686" y="418" width="2" height="2"/>
<rect x="683" y="421" width="2" height="2"/>
<rect x="688" y="422" width="2" height="2"/>
<rect x="688" y="423" width="2" height="2"/>
<rect x="682" y="426" width="2" height="2"/>
<rect x="692" y="426" width="2" height="2"/>
<rect x="695" y="428" width="2" height="2"/>
<rect x="679" y="429" width="2" height="2"/>
<rect x="684" y="429" width="2" height="2"/>
<rect x="694" y="436" width="2" height="2"/>
<rect x="698" y="435" width="2" height="2"/>
<rect x="697" y="439" width="2" height="2"/>
<rect x="693" y="452" width="2" height="2"/>
<rect x="714" y="393" width="2" height="2"/>
<rect x="714" y="400" width="2" height="2"/>
<rect x="713" y="423" width="2" height="2"/>
<rect x="716" y="422" width="2" height="2"/>
<rect x="711" y="428" width="2" height="2"/>
<rect x="712" y="435" width="2" height="2"/>
<rect x="704" y="442" width="2" height="2"/>
<rect x="706" y="443" width="2" height="2"/>
<rect x="709" y="442" width="2" height="2"/>
<rect x="701" y="445" width="2" height="2"/>
<rect x="703" y="446" width="2" height="2"/>
<rect x="706" y="446" width="2" height="2"/>
<rect x="702" y="449" width="2" height="2"/>
<rect x="718" y="444" width="2" height="2"/>
<rect x="721" y="441" width="2" height="2"/>
<rect x="724" y="440" width="2" height="2"/>
<rect x="717" y="448" width="2" height="2"/>
<rect x="710" y="455" width="2" height="2"/>
<rect x="724" y="453" width="2" height="2"/>
<rect x="728" y="438" width="2" height="2"/>
<rect x="732" y="434" width="2" height="2"/>
<rect x="735" y="438" width="2" height="2"/>
<rect x="726" y="426" width="2" height="2"/>
<rect x="731" y="421" width="2" height="2"/>
<rect x="735" y="418" width="2" height="2"/>
<rect x="726" y="417" width="2" height="2"/>
<rect x="729" y="414" width="2" height="2"/>
<rect x="730" y="409" width="2" height="2"/>
<rect x="733" y="407" width="2" height="2"/>
<rect x="736" y="407" width="2" height="2"/>
<rect x="739" y="410" width="2" height="2"/>
<rect x="736" y="413" width="2" height="2"/>
<rect x="742" y="401" width="2" height="2"/>
<rect x="742" y="404" width="2" height="2"/>
<rect x="744" y="410" width="2" height="2"/>
<rect x="740" y="419" width="2" height="2"/>
<rect x="736" y="429" width="2" height="2"/>
<rect x="743" y="431" width="2" height="2"/>
<rect x="746" y="427" width="2" height="2"/>
<rect x="748" y="434" width="2" height="2"/>
<rect x="750" y="423" width="2" height="2"/>
<rect x="753" y="420" width="2" height="2"/>
<rect x="757" y="418" width="2" height="2"/>
<rect x="758" y="414" width="2" height="2"/>
<rect x="751" y="409" width="2" height="2"/>
<rect x="752" y="407" width="2" height="2"/>
<rect x="755" y="402" width="2" height="2"/>
<rect x="764" y="405" width="2" height="2"/>
<rect x="765" y="408" width="2" height="2"/>
<rect x="763" y="413" width="2" height="2"/>
<rect x="763" y="417" width="2" height="2"/>
<rect x="760" y="424" width="2" height="2"/>
<rect x="762" y="431" width="2" height="2"/>
<rect x="761" y="434" width="2" height="2"/>
<rect x="756" y="435" width="2" height="2"/>
<rect x="754" y="432" width="2" height="2"/>
<rect x="759" y="441" width="2" height="2"/>
<rect x="745" y="443" width="2" height="2"/>
<rect x="747" y="446" width="2" height="2"/>
<rect x="746" y="451" width="2" height="2"/>
<rect x="759" y="449" width="2" height="2"/>
<rect x="766" y="393" width="2" height="2"/>
<rect x="768" y="414" width="2" height="2"/>
<rect x="769" y="409" width="2" height="2"/>
<rect x="769" y="425" width="2" height="2"/>
<rect x="767" y="427" width="2" height="2"/>
<rect x="776" y="400" width="2" height="2"/>
<rect x="775" y="406" width="2" height="2"/>
<rect x="779" y="405" width="2" height="2"/>
<rect x="777" y="422" width="2" height="2"/>
<rect x="775" y="425" width="2" height="2"/>
<rect x="778" y="429" width="2" height="2"/>
<rect x="773" y="435" width="2" height="2"/>
<rect x="771" y="437" width="2" height="2"/>
<rect x="780" y="434" width="2" height="2"/>
<rect x="780" y="438" width="2" height="2"/>
<rect x="790" y="441" width="2" height="2"/>
<rect x="795" y="445" width="2" height="2"/>
<rect x="789" y="450" width="2" height="2"/>
<rect x="796" y="454" width="2" height="2"/>
<rect x="771" y="453" width="2" height="2"/>
<rect x="785" y="456" width="2" height="2"/>
<rect x="794" y="467" width="2" height="2"/>
<rect x="786" y="469" width="2" height="2"/>
<rect x="786" y="472" width="2" height="2"/>
<rect x="781" y="475" width="2" height="2"/>
<rect x="788" y="476" width="2" height="2"/>
<rect x="784" y="484" width="2" height="2"/>
<rect x="798" y="485" width="2" height="2"/>
<rect x="720" y="467" width="2" height="2"/>
<rect x="720" y="478" width="2" height="2"/>
<rect x="676" y="472" width="2" height="2"/>
<rect x="675" y="478" width="2" height="2"/>
<rect x="719" y="495" width="2" height="2"/>
<rect x="798" y="495" width="2" height="2"/>
<rect x="640" y="424" width="2" height="2"/>
<rect x="638" y="428" width="2" height="2"/>
<rect x="641" y="425" width="2" height="2"/>
<rect x="780" y="404" width="2" height="2"/>
<rect x="780" y="434" width="2" height="2"/>
<rect x="780" y="437" width="2" height="2"/>
<rect x="826" y="420" width="2" height="2"/>
<rect x="790" y="441" width="2" height="2"/>
<rect x="795" y="444" width="2" height="2"/>
<rect x="815" y="442" width="2" height="2"/>
<rect x="823" y="443" width="2" height="2"/>
<rect x="785" y="447" width="2" height="2"/>
<rect x="789" y="450" width="2" height="2"/>
<rect x="795" y="454" width="2" height="2"/>
<rect x="825" y="450" width="2" height="2"/>
<rect x="824" y="455" width="2" height="2"/>
<rect x="837" y="447" width="2" height="2"/>
<rect x="843" y="448" width="2" height="2"/>
<rect x="837" y="454" width="2" height="2"/>
<rect x="863" y="437" width="2" height="2"/>
<rect x="871" y="450" width="2" height="2"/>
<rect x="861" y="458" width="2" height="2"/>
<rect x="811" y="457" width="2" height="2"/>
<rect x="784" y="456" width="2" height="2"/>
<rect x="782" y="474" width="2" height="2"/>
<rect x="787" y="476" width="2" height="2"/>
<rect x="785" y="469" width="2" height="2"/>
<rect x="794" y="467" width="2" height="2"/>
<rect x="802" y="468" width="2" height="2"/>
<rect x="809" y="469" width="2" height="2"/>
<rect x="808" y="476" width="2" height="2"/>
<rect x="801" y="478" width="2" height="2"/>
<rect x="815" y="470" width="2" height="2"/>
<rect x="818" y="468" width="2" height="2"/>
<rect x="818" y="474" width="2" height="2"/>
<rect x="823" y="471" width="2" height="2"/>
<rect x="827" y="468" width="2" height="2"/>
<rect x="830" y="468" width="2" height="2"/>
<rect x="832" y="478" width="2" height="2"/>
<rect x="839" y="468" width="2" height="2"/>
<rect x="842" y="470" width="2" height="2"/>
<rect x="845" y="474" width="2" height="2"/>
<rect x="847" y="472" width="2" height="2"/>
<rect x="847" y="478" width="2" height="2"/>
<rect x="850" y="467" width="2" height="2"/>
<rect x="855" y="473" width="2" height="2"/>
<rect x="854" y="477" width="2" height="2"/>
<rect x="858" y="476" width="2" height="2"/>
<rect x="859" y="480" width="2" height="2"/>
<rect x="861" y="463" width="2" height="2"/>
<rect x="863" y="468" width="2" height="2"/>
<rect x="865" y="473" width="2" height="2"/>
<rect x="868" y="469" width="2" height="2"/>
<rect x="872" y="471" width="2" height="2"/>
<rect x="868" y="477" width="2" height="2"/>
<rect x="867" y="481" width="2" height="2"/>
<rect x="870" y="483" width="2" height="2"/>
<rect x="873" y="488" width="2" height="2"/>
<rect x="782" y="484" width="2" height="2"/>
<rect x="799" y="486" width="2" height="2"/>
<rect x="805" y="486" width="2" height="2"/>
<rect x="828" y="482" width="2" height="2"/>
<rect x="838" y="485" width="2" height="2"/>
<rect x="845" y="482" width="2" height="2"/>
<rect x="850" y="488" width="2" height="2"/>
<rect x="852" y="489" width="2" height="2"/>
<rect x="857" y="484" width="2" height="2"/>
<rect x="797" y="495" width="2" height="2"/>
<rect x="806" y="493" width="2" height="2"/>
<rect x="841" y="498" width="2" height="2"/>
<rect x="803" y="503" width="2" height="2"/>
<rect x="798" y="509" width="2" height="2"/>
<rect x="804" y="508" width="2" height="2"/>
<rect x="806" y="512" width="2" height="2"/>
<rect x="805" y="517" width="2" height="2"/>
<rect x="874" y="504" width="2" height="2"/>
<rect x="877" y="503" width="2" height="2"/>
<rect x="876" y="507" width="2" height="2"/>
<rect x="878" y="510" width="2" height="2"/>
<rect x="875" y="516" width="2" height="2"/>
<rect x="879" y="519" width="2" height="2"/>
<rect x="881" y="521" width="2" height="2"/>
<rect x="880" y="525" width="2" height="2"/>
<rect x="876" y="528" width="2" height="2"/>
<rect x="881" y="528" width="2" height="2"/>
<rect x="884" y="477" width="2" height="2"/>
<rect x="886" y="479" width="2" height="2"/>
<rect x="885" y="483" width="2" height="2"/>
<rect x="887" y="483" width="2" height="2"/>
<rect x="882" y="490" width="2" height="2"/>
<rect x="889" y="466" width="2" height="2"/>
<rect x="889" y="460" width="2" height="2"/>
<rect x="890" y="451" width="2" height="2"/>
<rect x="891" y="445" width="2" height="2"/>
<rect x="892" y="440" width="2" height="2"/>
<rect x="893" y="436" width="2" height="2"/>
<rect x="894" y="433" width="2" height="2"/>
<rect x="895" y="430" width="2" height="2"/>
<rect x="896" y="427" width="2" height="2"/>
<rect x="898" y="426" width="2" height="2"/>
<rect x="898" y="485" width="2" height="2"/>
<rect x="899" y="492" width="2" height="2"/>
<rect x="910" y="485" width="2" height="2"/>
<rect x="912" y="498" width="2" height="2"/>
<rect x="909" y="503" width="2" height="2"/>
<rect x="911" y="508" width="2" height="2"/>
<rect x="900" y="513" width="2" height="2"/>
<rect x="901" y="523" width="2" height="2"/>
<rect x="902" y="533" width="2" height="2"/>
<rect x="902" y="540" width="2" height="2"/>
<rect x="903" y="545" width="2" height="2"/>
<rect x="904" y="550" width="2" height="2"/>
<rect x="906" y="554" width="2" height="2"/>
<rect x="907" y="558" width="2" height="2"/>
<rect x="908" y="528" width="2" height="2"/>
<rect x="913" y="529" width="2" height="2"/>
<rect x="915" y="526" width="2" height="2"/>
<rect x="916" y="528" width="2" height="2"/>
<rect x="915" y="536" width="2" height="2"/>
<rect x="919" y="534" width="2" height="2"/>
<rect x="919" y="536" width="2" height="2"/>
<rect x="920" y="525" width="2" height="2"/>
<rect x="921" y="521" width="2" height="2"/>
<rect x="921" y="516" width="2" height="2"/>
<rect x="923" y="512" width="2" height="2"/>
<rect x="924" y="509" width="2" height="2"/>
<rect x="925" y="506" width="2" height="2"/>
<rect x="927" y="504" width="2" height="2"/>
<rect x="930" y="502" width="2" height="2"/>
<rect x="932" y="501" width="2" height="2"/>
<rect x="934" y="490" width="2" height="2"/>
<rect x="935" y="488" width="2" height="2"/>
<rect x="938" y="487" width="2" height="2"/>
<rect x="941" y="508" width="2" height="2"/>
<rect x="941" y="509" width="2" height="2"/>
<rect x="942" y="520" width="2" height="2"/>
<rect x="944" y="524" width="2" height="2"/>
<rect x="945" y="521" width="2" height="2"/>
<rect x="948" y="519" width="2" height="2"/>
<rect x="950" y="520" width="2" height="2"/>
<rect x="954" y="520" width="2" height="2"/>
<rect x="954" y="523" width="2" height="2"/>
<rect x="950" y="528" width="2" height="2"/>
<rect x="944" y="531" width="2" height="2"/>
<rect x="945" y="533" width="2" height="2"/>
<rect x="952" y="531" width="2" height="2"/>
<rect x="953" y="535" width="2" height="2"/>
<rect x="953" y="537" width="2" height="2"/>
<rect x="955" y="514" width="2" height="2"/>
<rect x="956" y="510" width="2" height="2"/>
<rect x="957" y="507" width="2" height="2"/>
<rect x="959" y="504" width="2" height="2"/>
<rect x="1135" y="395" width="2" height="2"/>
<rect x="1148" y="396" width="2" height="2"/>
<rect x="1158" y="392" width="2" height="2"/>
<rect x="1158" y="402" width="2" height="2"/>
<rect x="1143" y="400" width="2" height="2"/>
<rect x="1141" y="406" width="2" height="2"/>
<rect x="1134" y="405" width="2" height="2"/>
<rect x="1128" y="410" width="2" height="2"/>
<rect x="1130" y="413" width="2" height="2"/>
<rect x="1126" y="414" width="2" height="2"/>
<rect x="1140" y="411" width="2" height="2"/>
<rect x="1145" y="411" width="2" height="2"/>
<rect x="1151" y="415" width="2" height="2"/>
<rect x="1146" y="415" width="2" height="2"/>
<rect x="1140" y="417" width="2" height="2"/>
<rect x="1126" y="419" width="2" height="2"/>
<rect x="1131" y="421" width="2" height="2"/>
<rect x="1149" y="418" width="2" height="2"/>
<rect x="1154" y="419" width="2" height="2"/>
<rect x="1149" y="421" width="2" height="2"/>
<rect x="1152" y="422" width="2" height="2"/>
<rect x="1155" y="424" width="2" height="2"/>
<rect x="1139" y="424" width="2" height="2"/>
<rect x="1144" y="424" width="2" height="2"/>
<rect x="1131" y="426" width="2" height="2"/>
<rect x="1136" y="427" width="2" height="2"/>
<rect x="1144" y="427" width="2" height="2"/>
<rect x="1150" y="427" width="2" height="2"/>
<rect x="1159" y="426" width="2" height="2"/>
<rect x="1160" y="428" width="2" height="2"/>
<rect x="1157" y="432" width="2" height="2"/>
<rect x="1147" y="432" width="2" height="2"/>
<rect x="1153" y="434" width="2" height="2"/>
<rect x="1155" y="434" width="2" height="2"/>
<rect x="1137" y="435" width="2" height="2"/>
<rect x="1161" y="435" width="2" height="2"/>
<rect x="1168" y="432" width="2" height="2"/>
<rect x="1162" y="441" width="2" height="2"/>
<rect x="1137" y="446" width="2" height="2"/>
<rect x="1166" y="447" width="2" height="2"/>
<rect x="1164" y="452" width="2" height="2"/>
<rect x="1167" y="454" width="2" height="2"/>
<rect x="1162" y="458" width="2" height="2"/>
<rect x="1163" y="470" width="2" height="2"/>
<rect x="1123" y="455" width="2" height="2"/>
<rect x="1124" y="458" width="2" height="2"/>
<rect x="1121" y="466" width="2" height="2"/>
<rect x="1125" y="439" width="2" height="2"/>
<rect x="1122" y="454" width="2" height="2"/>
<rect x="1124" y="454" width="2" height="2"/>
<rect x="1174" y="384" width="2" height="2"/>
<rect x="1175" y="390" width="2" height="2"/>
<rect x="1169" y="408" width="2" height="2"/>
<rect x="1170" y="404" width="2" height="2"/>
<rect x="1172" y="403" width="2" height="2"/>
<rect x="1175" y="409" width="2" height="2"/>
<rect x="1178" y="407" width="2" height="2"/>
<rect x="1183" y="412" width="2" height="2"/>
<rect x="1177" y="420" width="2" height="2"/>
<rect x="1179" y="424" width="2" height="2"/>
<rect x="1181" y="427" width="2" height="2"/>
<rect x="1179" y="430" width="2" height="2"/>
<rect x="1185" y="430" width="2" height="2"/>
<rect x="1188" y="432" width="2" height="2"/>
<rect x="1186" y="434" width="2" height="2"/>
<rect x="1182" y="435" width="2" height="2"/>
<rect x="1196" y="430" width="2" height="2"/>
<rect x="1188" y="439" width="2" height="2"/>
<rect x="1191" y="439" width="2" height="2"/>
<rect x="1184" y="443" width="2" height="2"/>
<rect x="1193" y="441" width="2" height="2"/>
<rect x="1198" y="442" width="2" height="2"/>
<rect x="1195" y="444" width="2" height="2"/>
<rect x="1192" y="446" width="2" height="2"/>
<rect x="1189" y="448" width="2" height="2"/>
<rect x="1191" y="449" width="2" height="2"/>
<rect x="1194" y="454" width="2" height="2"/>
<rect x="1184" y="455" width="2" height="2"/>
<rect x="1186" y="456" width="2" height="2"/>
<rect x="1196" y="458" width="2" height="2"/>
<rect x="1199" y="468" width="2" height="2"/>
<rect x="1201" y="486" width="2" height="2"/>
<rect x="1201" y="492" width="2" height="2"/>
<rect x="1203" y="480" width="2" height="2"/>
<rect x="1204" y="476" width="2" height="2"/>
<rect x="1204" y="468" width="2" height="2"/>
<rect x="1205" y="463" width="2" height="2"/>
<rect x="1206" y="458" width="2" height="2"/>
<rect x="1208" y="453" width="2" height="2"/>
<rect x="1209" y="449" width="2" height="2"/>
<rect x="1210" y="458" width="2" height="2"/>
<rect x="1210" y="445" width="2" height="2"/>
<rect x="1212" y="439" width="2" height="2"/>
<rect x="1214" y="433" width="2" height="2"/>
<rect x="1214" y="430" width="2" height="2"/>
<rect x="1215" y="427" width="2" height="2"/>
<rect x="1216" y="425" width="2" height="2"/>
<rect x="1219" y="422" width="2" height="2"/>
<rect x="1222" y="421" width="2" height="2"/>
<rect x="1224" y="421" width="2" height="2"/>
<rect x="1226" y="421" width="2" height="2"/>
<rect x="1227" y="426" width="2" height="2"/>
<rect x="1228" y="436" width="2" height="2"/>
<rect x="1229" y="449" width="2" height="2"/>
<rect x="1231" y="453" width="2" height="2"/>
<rect x="1229" y="457" width="2" height="2"/>
<rect x="1233" y="491" width="2" height="2"/>
<rect x="1234" y="495" width="2" height="2"/>
<rect x="1235" y="500" width="2" height="2"/>
<rect x="1236" y="505" width="2" height="2"/>
<rect x="1237" y="509" width="2" height="2"/>
<rect x="1239" y="513" width="2" height="2"/>
<rect x="1240" y="515" width="2" height="2"/>
<rect x="1241" y="507" width="2" height="2"/>
<rect x="1242" y="501" width="2" height="2"/>
<rect x="1243" y="497" width="2" height="2"/>
<rect x="1245" y="494" width="2" height="2"/>
<rect x="1247" y="491" width="2" height="2"/>
<rect x="1249" y="490" width="2" height="2"/>
<rect x="1253" y="489" width="2" height="2"/>
<rect x="1275" y="474" width="2" height="2"/>
<rect x="1276" y="465" width="2" height="2"/>
<rect x="1277" y="456" width="2" height="2"/>
<rect x="1278" y="449" width="2" height="2"/>
<rect x="1279" y="444" width="2" height="2"/>
<rect x="1279" y="440" width="2" height="2"/>
<rect x="1280" y="438" width="2" height="2"/>
</g>
<g fill="none" stroke="#8000ff" stroke-width="1" shape-rendering="crispEdges">
<polyline points="154.0,768.0 154.0,739.0 155.0,727.0 155.5,710.0 156.3,727.0 157.0,739.0 157.5,756.0 157.8,768.0"/>
<polyline points="165.3,768.0 165.5,756.0 166.5,743.0 167.5,743.0 168.0,756.0 168.5,768.0 169.0,756.0 169.5,743.0 170.2,756.0 170.8,768.0"/>
<polyline points="172.2,768.0 172.5,739.0 173.0,727.0 173.6,710.0 174.3,727.0 174.8,739.0 175.3,756.0 175.7,768.0"/>
<polyline points="188.3,768.0 188.5,756.0 189.0,739.0 189.6,727.0 190.4,710.0 191.0,739.0 191.8,768.0 192.0,756.0 192.5,743.0 193.5,727.0 194.6,710.0 197.6,710.0 197.6,768.0"/>
<polyline points="417.0,768.0 417.0,743.0 418.5,743.0 418.5,756.0 420.0,756.0 420.0,768.0"/>
<polyline points="638.5,768.0 639.0,743.0 640.0,727.0 641.0,710.0 642.0,727.0 643.0,743.0"/>
<polyline points="643.0,743.0 643.5,743.5 644.5,743.5 645.5,743.5 646.5,743.5 647.5,743.5 647.5,743.5 648.5,743.5 649.5,710.5 650.5,743.5 651.5,743.5 651.5,710.5 652.5,743.5 653.5,710.5 654.5,743.5 655.5,743.5 656.5,743.5 656.5,743.5 657.5,710.5 658.5,743.5 659.5,710.5 660.5,710.5 660.5,743.5 661.5,710.5 662.5,743.5 663.5,743.5 664.5,743.5 664.5,710.5 665.5,743.5 666.5,710.5 667.5,710.5 668.5,710.5 669.5,710.5 669.5,743.5 670.5,710.5 671.5,743.5 672.5,710.5 673.5,710.5 673.5,743.5 674.5,743.5 675.5,743.5 676.5,710.5 677.5,743.5 677.5,743.5 678.5,743.5 679.5,743.5 680.5,743.5 681.5,743.5 682.5,743.5 682.5,743.5 683.5,710.5 684.5,710.5 685.5,710.5 686.5,710.5 686.5,683.5 687.5,710.5 688.5,743.5 689.5,710.5 690.5,710.5 690.5,710.5 691.5,743.5 692.5,710.5 693.5,743.5 694.5,710.5 695.5,743.5 695.5,743.5 696.5,743.5 697.5,710.5 698.5,683.5 699.5,743.5 699.5,710.5 700.5,743.5 701.5,743.5 702.5,743.5 703.5,710.5 703.5,710.5 704.5,743.5 705.5,743.5 706.5,743.5 707.5,710.5 708.5,743.5 708.5,710.5 709.5,683.5 710.5,710.5 711.5,683.5 712.5,710.5 712.5,743.5 713.5,743.5 714.5,743.5 715.5,743.5 716.5,743.5 716.5,743.5 717.5,743.5 718.5,743.5 719.5,710.5 720.5,743.5 721.5,710.5 721.5,710.5 722.5,743.5 723.5,743.5 724.5,743.5 725.5,743.5 725.5,743.5 726.5,743.5 727.5,743.5 728.5,710.5 729.5,743.5 729.5,743.5 730.5,710.5 731.5,743.5 732.5,743.5 733.5,710.5"/>
<polyline points="661.5,743.0 662.0,768.0 662.6,743.0"/>
<polyline points="730.0,743.0 730.5,768.0 731.5,768.0 732.0,743.0"/>
<polyline points="673.8,710.0 674.4,697.0 675.0,683.0 675.6,697.0 676.2,710.0"/>
<polyline points="676.3,710.0 676.9,697.0 677.5,683.0 678.1,697.0 678.7,710.0"/>
<polyline points="693.3,710.0 693.9,697.0 694.5,683.0 695.1,697.0 695.7,710.0"/>
<polyline points="701.3,710.0 701.9,697.0 702.5,683.0 703.1,697.0 703.7,710.0"/>
<polyline points="706.4,710.0 707.0,697.0 707.6,683.0 708.2,697.0 708.8,710.0"/>
<polyline points="711.5,710.0 712.1,697.0 712.7,683.0 713.3,697.0 713.9,710.0"/>
<polyline points="716.3,710.0 716.9,697.0 717.5,683.0 718.1,697.0 718.7,710.0"/>
<polyline points="733.4,710.0 734.0,697.0 734.6,683.0 735.2,697.0 735.8,710.0"/>
<polyline points="735.2,710.0 735.8,697.0 736.4,683.0 737.0,697.0 737.6,710.0"/>
<polyline points="740.5,710.0 741.1,697.0 741.7,683.0 742.3,697.0 742.9,710.0"/>
<polyline points="733.0,743.0 733.5,743.5 734.5,743.5 735.5,710.5 736.5,743.5 737.5,743.5 737.5,743.5 738.5,743.5 739.5,743.5 740.5,743.5 741.5,710.5 741.5,743.5 742.5,743.5 743.5,743.5 744.5,710.5 745.5,710.5 746.5,743.5 746.5,710.5 747.5,710.5 748.5,743.5 749.5,743.5 750.5,743.5 750.5,743.5 751.5,743.5 752.5,743.5 753.5,743.5"/>
<polyline points="753.0,710.0 753.5,683.5 754.5,683.5 755.5,683.5 756.5,683.5 757.5,683.5 757.5,683.5 758.5,743.5 759.5,710.5 760.5,683.5 761.5,683.5 761.5,683.5 762.5,710.5 763.5,710.5 764.5,710.5 765.5,683.5"/>
<polyline points="772.0,710.0 772.5,683.5 773.5,683.5 774.5,710.5 775.5,710.5 776.5,743.5 776.5,710.5 777.5,710.5 778.5,683.5 779.5,710.5 780.5,683.5 780.5,710.5 781.5,683.5 782.5,683.5 783.5,710.5 784.5,683.5"/>
<polyline points="754.3,683.0 755.0,668.0 755.5,651.0 756.0,668.0 756.7,683.0"/>
<polyline points="760.1,683.0 760.8,668.0 761.3,651.0 761.8,668.0 762.5,683.0"/>
<polyline points="775.3,683.0 776.0,668.0 776.5,651.0 777.0,668.0 777.7,683.0"/>
<polyline points="781.1,683.0 781.8,668.0 782.3,651.0 782.8,668.0 783.5,683.0"/>
<polyline points="779.0,710.0 779.4,768.0 780.0,768.0 780.5,743.0"/>
<polyline points="784.0,743.0 784.5,743.5 785.5,710.5 786.5,743.5 787.5,710.5 788.5,743.5 788.5,710.5 789.5,710.5 790.5,743.5 791.5,710.5 792.5,743.5 792.5,743.5 793.5,710.5 794.5,743.5 795.5,743.5 796.5,710.5 797.5,743.5 797.5,743.5 798.5,743.5 799.5,768.5 800.5,710.5 801.5,710.5 801.5,743.5 802.5,743.5 803.5,743.5 804.5,710.5 805.5,743.5 805.5,710.5 806.5,743.5 807.5,743.5 808.5,710.5 809.5,743.5 810.5,710.5 810.5,743.5 811.5,710.5 812.5,743.5 813.5,710.5 814.5,743.5 814.5,743.5 815.5,710.5 816.5,743.5"/>
<polyline points="816.0,710.0 816.5,710.5 817.5,683.5 818.5,710.5 819.5,683.5 820.5,710.5 820.5,710.5 821.5,683.5 822.5,710.5 823.5,683.5 824.5,710.5 824.5,710.5 825.5,710.5 826.5,743.5 827.5,683.5 828.5,710.5 829.5,710.5 829.5,743.5 830.5,710.5 831.5,710.5"/>
<polyline points="827.0,683.0 827.6,668.0 828.6,651.0 829.2,668.0 829.8,683.0"/>
<polyline points="831.0,743.0 831.5,710.5 832.5,743.5 833.5,743.5 834.5,710.5 835.5,743.5 835.5,710.5 836.5,710.5 837.5,743.5 838.5,710.5 839.5,743.5 839.5,743.5 840.5,710.5 841.5,710.5 842.5,743.5 843.5,710.5 844.5,743.5 844.5,743.5 845.5,743.5 846.5,710.5 847.5,710.5 848.5,743.5"/>
<polyline points="845.8,710.0 846.7,683.0 847.5,710.0"/>
<polyline points="848.0,743.0 848.5,743.5 849.5,743.5 850.5,743.5 851.5,743.5 852.5,710.5 852.5,710.5 853.5,743.5 854.5,743.5 855.5,743.5 856.5,743.5"/>
<polyline points="856.0,710.0 856.5,710.5 857.5,683.5 858.5,683.5 859.5,710.5 860.5,743.5 860.5,710.5 861.5,710.5 862.5,683.5 863.5,683.5 864.5,683.5 864.5,683.5 865.5,683.5 866.5,710.5 867.5,710.5 868.5,743.5 869.5,683.5"/>
<polyline points="858.6,683.0 859.3,668.0 859.8,651.0 860.6,651.0 861.0,668.0 861.6,683.0"/>
<polyline points="869.0,743.0 869.5,743.5 870.5,710.5 871.5,710.5 872.5,710.5 873.5,743.5 873.5,743.5 874.5,743.5 875.5,743.5 876.5,710.5 877.5,743.5 877.5,710.5 878.5,743.5 879.5,743.5 880.5,710.5 881.5,710.5 882.5,743.5 882.5,743.5 883.5,743.5 884.5,743.5"/>
<polyline points="884.0,743.0 884.5,768.0"/>
<polyline points="884.0,768.0 884.5,743.5 885.5,710.5 886.5,743.5 887.5,768.5 888.5,743.5 888.5,743.5 889.5,710.5 890.5,743.5 891.5,743.5 892.5,710.5 892.5,743.5 893.5,710.5 894.5,743.5 895.5,743.5"/>
<polyline points="896.5,768.0 897.3,756.0 898.3,743.0 899.1,727.0 899.7,710.0 900.3,727.0 901.1,743.0 902.1,756.0 902.9,768.0"/>
<polyline points="907.3,768.0 908.1,756.0 909.1,743.0 909.9,727.0 910.5,710.0 911.1,727.0 911.9,743.0 912.9,756.0 913.7,768.0"/>
<polyline points="916.8,768.0 917.6,756.0 918.6,743.0 919.4,727.0 920.0,710.0 920.6,727.0 921.4,743.0 922.4,756.0 923.2,768.0"/>
<polyline points="920.0,768.0 920.8,756.0 921.8,743.0 922.6,727.0 923.2,710.0 923.8,727.0 924.6,743.0 925.6,756.0 926.4,768.0"/>
<polyline points="936.3,768.0 937.1,756.0 938.1,743.0 938.9,727.0 939.5,710.0 940.1,727.0 940.9,743.0 941.9,756.0 942.7,768.0"/>
<polyline points="941.4,768.0 942.2,756.0 943.2,743.0 944.0,727.0 944.6,710.0 945.2,727.0 946.0,743.0 947.0,756.0 947.8,768.0"/>
<polyline points="934.0,768.0 934.5,756.0 935.5,743.0 936.5,743.0 937.0,768.0"/>
<polyline points="950.5,768.0 951.0,756.0 951.5,743.0 952.0,756.0 952.5,768.0"/>
<polyline points="990.0,768.0 990.3,756.0 991.5,743.0 992.7,756.0 993.0,768.0"/>
<polyline points="1120.3,768.0 1120.5,756.0 1121.3,743.0 1122.0,756.0 1122.5,768.0"/>
<polyline points="1123.0,743.0 1123.5,743.5 1124.5,743.5 1125.5,743.5 1126.5,710.5 1127.5,743.5 1127.5,743.5 1128.5,743.5 1129.5,710.5 1130.5,743.5 1131.5,710.5 1131.5,710.5 1132.5,743.5 1133.5,743.5 1134.5,743.5 1135.5,743.5 1136.5,768.5 1136.5,743.5 1137.5,743.5 1138.5,768.5 1139.5,743.5 1140.5,743.5 1140.5,743.5 1141.5,743.5 1142.5,768.5 1143.5,743.5 1144.5,743.5 1144.5,743.5 1145.5,743.5 1146.5,768.5"/>
<polyline points="1134.0,710.0 1135.0,683.0 1136.0,683.0 1136.5,710.0"/>
<polyline points="1144.0,710.0 1144.5,743.5 1145.5,710.5 1146.5,710.5 1147.5,683.5 1148.5,710.5 1148.5,683.5 1149.5,710.5 1150.5,683.5 1151.5,683.5 1152.5,710.5 1152.5,683.5 1153.5,683.5 1154.5,710.5 1155.5,743.5 1156.5,710.5 1157.5,743.5 1157.5,743.5 1158.5,710.5 1159.5,683.5 1160.5,683.5 1161.5,651.5 1161.5,710.5 1162.5,743.5 1163.5,743.5"/>
<polyline points="1147.5,683.0 1148.5,668.0 1149.2,651.0 1152.6,651.0 1153.2,668.0 1154.2,683.0"/>
<rect x="1149" y="651" width="4" height="16" fill="#8000ff"/>
<polyline points="1163.0,743.0 1163.5,743.5 1164.5,710.5 1165.5,710.5 1166.5,743.5 1167.5,710.5 1167.5,710.5 1168.5,710.5 1169.5,743.5 1170.5,710.5 1171.5,743.5 1171.5,743.5 1172.5,768.5 1173.5,710.5 1174.5,743.5 1175.5,768.5 1176.5,710.5 1176.5,743.5 1177.5,743.5 1178.5,743.5"/>
<polyline points="1179.0,743.0 1179.8,710.0 1180.5,683.0 1183.6,683.0 1184.2,710.0 1185.0,727.0 1186.0,743.0"/>
<polyline points="1186.0,743.0 1186.5,743.5 1187.5,743.5 1188.5,710.5 1189.5,710.5 1190.5,710.5 1190.5,743.5 1191.5,710.5 1192.5,743.5"/>
<polyline points="1195.5,768.0 1196.2,756.0 1197.2,743.0 1197.9,727.0 1198.5,710.0 1199.1,727.0 1199.8,743.0 1200.8,756.0 1201.5,768.0"/>
<polyline points="1198.5,768.0 1199.2,756.0 1200.2,743.0 1200.9,727.0 1201.5,710.0 1202.1,727.0 1202.8,743.0 1203.8,756.0 1204.5,768.0"/>
<polyline points="1208.4,768.0 1209.2,756.0 1210.1,743.0 1210.8,727.0 1211.4,710.0 1212.0,727.0 1212.8,743.0 1213.7,756.0 1214.4,768.0"/>
<polyline points="1215.6,768.0 1216.3,756.0 1217.2,743.0 1218.0,727.0 1218.6,710.0 1219.2,727.0 1219.9,743.0 1220.8,756.0 1221.6,768.0"/>
<polyline points="1226.0,768.0 1226.8,756.0 1227.7,743.0 1228.4,727.0 1229.0,710.0 1229.6,727.0 1230.3,743.0 1231.2,756.0 1232.0,768.0"/>
<polyline points="1229.5,768.0 1230.2,756.0 1231.2,743.0 1231.9,727.0 1232.5,710.0 1233.1,727.0 1233.8,743.0 1234.8,756.0 1235.5,768.0"/>
<polyline points="1233.0,768.0 1233.8,756.0 1234.7,743.0 1235.4,727.0 1236.0,710.0 1236.6,727.0 1237.3,743.0 1238.2,756.0 1239.0,768.0"/>
<polyline points="1237.6,768.0 1238.3,756.0 1239.2,743.0 1240.0,727.0 1240.6,710.0 1241.2,727.0 1241.9,743.0 1242.8,756.0 1243.6,768.0"/>
<polyline points="1205.0,768.0 1205.5,756.0 1206.5,743.0 1207.5,756.0 1208.0,768.0"/>
<polyline points="1213.5,768.0 1214.0,756.0 1215.0,743.0 1216.0,756.0 1216.5,768.0"/>
<polyline points="1222.5,768.0 1223.0,756.0 1224.0,743.0 1225.0,756.0 1225.5,768.0"/>
<polyline points="1254.5,768.0 1255.0,756.0 1256.0,743.0 1257.0,756.0 1257.5,768.0"/>
<polyline points="1276.0,768.0 1276.5,756.0 1277.3,743.0 1279.0,743.0 1279.6,727.0 1280.5,710.0 1281.0,768.0"/>
<polyline points="1317.5,768.0 1318.0,743.0 1318.8,710.0 1319.5,743.0 1320.0,756.0"/>
<polyline points="765.5,683.0 765.5,620.0 766.5,550.0 767.5,540.0 768.5,476.0 769.5,420.0 770.5,359.0 770.5,505.0 771.5,505.0 771.5,710.0"/>
<polyline points="769.5,476.0 769.5,594.0"/>
<polygon points="767,542 768,476 771,476 771,512 770,542" fill="#8000ff" stroke="none"/>
</g>
<g fill="none" stroke="#000" stroke-width="1" shape-rendering="crispEdges">
<polyline points="195.3,768.0 196.0,760.0 196.7,750.0 197.3,743.0 200.6,743.0 201.3,752.0 201.6,768.0"/>
<polyline points="643.8,768.0 645.0,756.0 646.7,743.4 667.4,743.4 669.2,768.0 670.5,768.0 672.8,743.4 730.8,743.4 733.0,768.0 734.4,768.0 736.6,743.4 754.7,743.4 756.0,727.0 757.6,710.4 767.0,710.4 768.5,697.0 770.0,683.0 771.5,668.0 773.6,651.0 776.0,683.0 778.5,715.0 780.9,743.4 790.0,743.4 792.3,768.0 795.2,768.0 797.4,743.4 799.6,743.4 801.8,768.0"/>
<polyline points="815.5,768.0 817.0,756.0 818.4,743.4 822.8,743.4 825.0,727.0 827.5,712.0 828.6,710.4 830.0,722.0 832.2,743.4 836.6,743.4 838.7,768.0 839.5,768.0 841.0,743.4 864.6,743.4 864.6,710.4 868.5,710.4 870.0,727.0 871.4,743.4 881.0,743.4 883.3,768.0"/>
<polyline points="946.8,768.0 947.0,743.4 949.4,743.4 950.5,756.0 952.0,768.0"/>
<polyline points="1128.0,768.0 1130.0,756.0 1132.0,743.1 1142.3,743.1 1144.4,768.0"/>
<polyline points="1148.7,768.0 1151.0,745.0 1153.0,722.0 1154.3,710.1 1159.3,710.1 1160.5,727.0 1161.6,743.0 1202.3,743.0 1204.5,768.0"/>
<polyline points="1230.3,768.0 1231.5,756.0 1232.9,743.0 1236.0,743.0 1237.0,756.0 1238.0,768.0"/>
</g>
<g fill="none" stroke-width="2" stroke-linejoin="round" shape-rendering="crispEdges">
<polyline points="151.0,105.6 160.0,105.6 163.0,101.0 165.8,98.9 168.0,101.5 171.4,104.2 179.0,104.4 179.5,105.6 209.0,105.6 211.0,102.5 212.8,101.4 215.0,103.0 218.0,104.4 225.0,104.4 225.5,105.6 242.0,105.6 243.5,102.0 246.0,100.0 249.3,98.9 255.0,98.9 256.0,98.4 422.0,98.4 423.5,96.0 424.8,94.3 426.5,96.5 428.0,97.5 430.0,98.4 537.0,98.4 538.0,97.0 540.0,97.5 542.0,98.4 543.0,97.0 545.0,95.0 547.8,92.5 550.0,91.8 553.3,91.2 706.0,91.2 707.0,94.0 709.0,96.5 712.4,98.2 762.5,98.4 763.0,101.0 765.0,103.5 766.5,104.4 771.5,104.6 772.0,107.0 774.0,110.0 776.0,111.0 781.5,112.2 783.0,114.0 785.0,117.0 786.6,119.5 788.0,118.0 791.0,114.5 795.4,112.8 828.8,112.8 829.5,115.7 831.0,115.5 833.0,113.5 836.9,112.8 843.0,112.8 844.0,114.0 846.0,116.0 848.0,118.5 850.7,119.3 853.0,118.0 855.0,115.5 857.0,114.0 858.8,113.4 861.0,116.0 864.0,118.5 867.6,119.7 882.7,119.9 884.0,117.0 887.0,114.5 891.5,112.8 1014.7,112.8 1015.5,110.0 1017.0,109.0 1019.0,111.0 1021.0,109.5 1024.0,107.5 1028.0,105.9 1122.7,105.9 1123.5,103.0 1125.0,100.5 1129.0,99.0 1136.6,97.8 1190.5,97.8 1191.5,101.0 1193.5,103.5 1195.7,104.8 1202.0,104.9 1202.5,105.7 1228.2,105.7 1229.5,103.0 1231.0,102.0 1232.5,103.5 1234.5,104.8 1241.0,104.9 1241.8,105.7 1320.0,105.7" stroke="#804000"/>
<polyline points="151.0,341.4 160.0,342.0 172.6,342.7 180.0,342.0 187.0,341.0 195.0,340.7 202.0,341.2 210.0,342.0 220.0,342.7 226.0,342.0 233.0,341.4 242.0,342.2 250.0,343.0 270.0,343.0 281.0,342.0 290.0,342.5 301.0,343.4 308.0,344.5 316.0,345.7 351.0,345.7 360.0,344.5 370.0,343.3 384.0,342.2 392.0,342.6 401.0,343.0 414.0,343.7 425.0,344.8 436.0,346.0 446.6,346.7 453.0,346.0 459.0,345.2 468.0,344.6 476.8,344.0 487.0,343.0 497.0,342.2 505.0,342.0 511.3,342.9 520.0,341.0 532.7,339.2 545.0,338.4 554.0,337.7 558.0,336.5 562.8,335.1 570.0,334.5 583.0,333.1 592.0,332.7 600.5,332.4 615.0,331.0 630.7,329.6 666.0,329.6 675.0,328.6 683.5,327.8 718.7,327.8 726.0,329.4 736.0,330.2 746.0,331.0 754.0,332.0 761.4,332.9 766.0,331.5 770.0,330.6 785.0,330.0 799.0,329.6 810.0,331.0 821.8,332.6 828.0,332.2 834.0,331.9 845.0,332.6 857.0,333.7 870.0,333.5 885.0,333.0 900.0,332.5 920.0,332.9 940.0,332.0 958.0,331.0 974.0,330.2 990.0,329.8 1001.0,329.5 1010.0,328.3 1019.0,327.0 1027.7,325.8 1040.0,324.4 1052.0,323.0 1064.5,321.8 1185.0,321.8 1196.0,320.5 1207.0,319.1 1215.0,320.0 1222.0,321.1 1235.5,322.8 1246.0,323.4 1257.0,323.8 1320.0,323.8" stroke="#00ff40"/>
<polyline points="151.0,506.4 157.0,506.0 160.0,505.0 164.7,503.9 170.0,504.5 175.0,505.8 181.4,506.4 202.4,507.0 205.0,508.0 208.7,508.7 211.0,508.0 213.9,507.3 216.0,508.0 219.0,508.7 224.0,509.3 229.6,509.8 242.0,509.8 245.0,508.5 247.5,507.2 249.5,507.0 296.7,507.0 298.0,508.1 328.0,508.1 331.0,509.0 335.4,509.6 363.7,509.6 372.0,509.0 380.5,508.5 395.0,508.0 407.7,507.5 415.0,507.0 420.0,506.6 423.0,505.0 426.0,503.9 429.0,504.5 431.8,505.0 463.0,505.0 467.0,504.0 471.4,502.9 497.0,502.9 499.0,503.8 501.0,502.9 503.0,503.8 505.0,502.9 516.0,502.9 518.0,503.8 520.0,502.9 541.6,502.9 547.0,501.5 553.0,500.3 563.0,499.8 574.0,499.3 585.0,498.4 595.0,497.6 605.0,496.6 616.0,495.5 628.0,493.4 639.0,491.3 650.0,489.2 660.0,487.1 665.0,485.7 670.5,484.4 680.0,483.6 691.4,483.0 698.0,482.0 705.0,481.3 708.5,482.2 712.4,483.0 722.8,483.0 729.0,481.3 735.4,479.8 751.0,479.8 755.0,478.8 758.3,478.1 763.0,479.0 768.8,480.2 772.0,482.5 776.0,485.7 781.0,488.0 786.6,489.9 792.0,488.2 799.0,486.1 808.0,485.0 818.0,484.0 826.4,483.0 843.0,483.0 848.0,483.7 853.6,484.6 862.0,485.9 870.4,487.1 877.0,488.2 883.0,489.2 890.0,488.7 897.6,488.2 960.5,488.2 970.0,488.7 981.4,489.2 992.0,490.0 1002.4,490.7 1015.0,490.5 1020.0,490.9 1028.7,489.8 1059.0,489.8 1066.0,491.0 1074.0,492.0 1087.0,493.0 1100.0,494.1 1119.6,494.1 1123.0,493.0 1126.0,492.0 1132.6,490.9 1191.0,490.9 1195.0,492.3 1199.7,493.5 1213.0,494.0 1227.8,494.6 1230.5,494.0 1233.0,493.5 1240.0,494.7 1247.0,495.9 1255.0,497.0 1262.5,498.0 1269.0,499.8 1275.5,501.7 1284.0,502.8 1292.8,503.9 1305.0,505.0 1319.8,506.0" stroke="#008040"/>
<polyline points="151.0,486.5 155.0,486.5 160.5,485.5 180.0,485.5 184.6,488.0 202.0,488.0 207.0,489.0 213.0,489.7 232.8,489.7 234.0,490.7 242.0,490.7 244.0,489.9 296.7,489.9 298.0,490.9 328.0,490.9 332.0,491.5 340.0,492.5 355.0,492.5 364.0,491.3 375.0,491.0 384.6,490.7 400.0,490.3 412.0,489.9 420.0,489.0 428.6,488.2 463.0,488.2 468.0,487.3 473.5,486.5 485.0,486.0 494.5,485.9 500.8,486.9 506.0,486.5 513.0,486.1 534.0,485.7 557.0,485.0 575.0,484.3 590.8,483.6 600.0,482.8 607.6,481.9 620.0,479.8 632.7,477.7 645.0,474.8 660.0,471.4 673.0,470.0 687.0,468.9 700.0,467.4 710.0,466.2 725.0,464.0 739.6,462.0 757.0,461.0 764.6,460.3 772.0,462.0 780.0,464.0 788.7,465.6 795.0,464.4 801.0,463.0 810.0,462.0 820.0,461.0 824.0,461.6 829.0,461.0 834.8,460.5 851.5,461.0 862.0,461.8 872.5,462.6 882.0,463.7 891.0,464.7 893.0,465.4 938.0,465.4 939.5,466.2 955.0,466.5 971.0,466.8 985.0,467.3 998.0,467.7 1010.0,468.5 1023.0,469.3 1060.0,469.3 1066.0,471.0 1072.0,472.5 1083.0,473.6 1093.6,474.6 1110.0,474.4 1132.6,474.0 1201.9,474.0 1218.0,474.3 1234.0,474.6 1246.0,475.6 1258.0,476.8 1266.0,479.0 1273.3,481.1 1280.0,483.0 1286.3,484.4 1297.0,485.0 1308.0,485.5 1320.0,486.5" stroke="#0000ff"/>
<polyline points="151.0,493.0 302.0,493.0 304.0,494.0 306.0,494.0 308.0,493.0 319.3,493.0 321.0,496.0 323.0,499.0 324.5,499.7 326.5,498.5 329.0,495.5 332.3,493.0 516.5,493.0 519.0,490.0 521.5,487.0 523.8,485.0 525.5,487.5 527.0,490.5 528.0,490.9 530.0,489.0 532.0,486.5 534.3,485.0 538.0,484.0 541.6,483.4 589.8,483.4 592.0,481.0 594.0,478.5 596.0,477.3 600.0,476.0 605.5,474.8 624.4,474.8 626.0,473.0 628.0,470.5 630.7,468.3 634.0,466.8 638.0,465.6 639.0,463.5 641.5,461.0 643.5,462.5 646.4,464.0 651.6,464.7 653.7,466.2 656.8,464.7 660.0,465.3 666.0,465.8 687.0,465.8 689.0,463.5 691.4,461.0 694.0,459.0 696.7,457.8 702.0,457.8 704.0,460.0 706.0,463.0 708.6,465.0 710.5,463.5 713.4,460.0 717.0,458.8 720.7,458.2 763.5,458.2 765.0,460.0 767.0,462.5 768.8,464.0 772.0,465.0 777.0,465.6 785.5,465.6 786.0,463.0 787.6,461.0 788.5,462.5 789.5,460.5 790.5,462.0 791.5,460.5 792.5,461.8 793.5,460.5 795.0,461.0 797.0,459.8 799.0,459.0 802.0,458.2 820.0,458.2 821.5,460.0 823.7,463.0 825.5,462.0 828.0,460.3 832.7,458.2 843.0,458.2 844.5,460.5 846.5,463.0 849.4,464.7 854.0,465.4 860.0,465.8 938.5,465.8 940.0,468.0 942.0,471.0 944.0,473.3 946.8,474.6 1066.5,474.6 1068.0,477.0 1070.5,480.5 1074.0,482.6 1092.5,482.6 1094.5,480.0 1096.5,477.5 1098.4,475.7 1100.5,478.0 1103.0,481.0 1105.5,482.6 1115.0,482.6 1117.0,480.5 1119.5,477.5 1121.8,475.3 1127.0,474.6 1205.0,474.6 1207.0,477.5 1210.0,480.5 1213.8,482.6 1253.8,482.6 1254.0,486.5 1256.0,489.0 1259.0,491.3 1263.6,492.6 1320.0,492.6" stroke="#ff0000"/>
<polyline points="414.2,767.5 418.0,765.3 423.0,764.2 512.8,764.2 515.0,762.0 519.0,760.7 550.4,760.7 554.0,758.2 559.0,756.7 625.4,756.7 627.0,754.8 629.8,753.7 638.5,753.7 641.0,752.2 645.0,750.4 648.0,750.0 745.3,750.0 750.0,746.3 756.0,743.0 761.0,742.3 764.0,738.5 767.8,734.3 773.6,732.0 776.0,730.0 779.4,728.5 789.6,727.8 792.0,726.0 796.0,724.1 814.8,724.1 818.0,722.5 823.5,721.2 833.7,721.2 838.0,718.5 842.0,716.0 845.3,714.7 850.0,714.0 892.4,714.0 897.0,712.0 900.0,710.9 904.7,710.4 1141.0,710.4 1143.0,708.5 1146.0,707.0 1153.0,707.0 1156.0,705.0 1161.6,703.1 1320.0,703.1" stroke="#00e0ff"/>
</g>
<g fill="#00e0ff" shape-rendering="crispEdges">
<rect x="152" y="767" width="1168" height="1"/>
<rect x="411" y="763" width="3" height="4"/><rect x="412" y="762" width="1" height="1"/>
<rect x="513" y="763" width="3" height="4"/><rect x="514" y="762" width="1" height="1"/>
<rect x="551" y="763" width="3" height="4"/><rect x="552" y="762" width="1" height="1"/>
<rect x="624" y="763" width="3" height="4"/><rect x="625" y="762" width="1" height="1"/>
<rect x="640" y="763" width="3" height="4"/><rect x="641" y="762" width="1" height="1"/>
<rect x="744" y="763" width="3" height="4"/><rect x="745" y="762" width="1" height="1"/>
<rect x="748" y="763" width="3" height="4"/><rect x="749" y="762" width="1" height="1"/>
<rect x="759" y="763" width="3" height="4"/><rect x="760" y="762" width="1" height="1"/>
<rect x="761" y="763" width="3" height="4"/><rect x="762" y="762" width="1" height="1"/>
<rect x="763" y="763" width="3" height="4"/><rect x="764" y="762" width="1" height="1"/>
<rect x="765" y="763" width="3" height="4"/><rect x="766" y="762" width="1" height="1"/>
<rect x="773" y="763" width="3" height="4"/><rect x="774" y="762" width="1" height="1"/>
<rect x="789" y="763" width="3" height="4"/><rect x="790" y="762" width="1" height="1"/>
<rect x="815" y="763" width="3" height="4"/><rect x="816" y="762" width="1" height="1"/>
<rect x="832" y="763" width="3" height="4"/><rect x="833" y="762" width="1" height="1"/>
<rect x="839" y="763" width="3" height="4"/><rect x="840" y="762" width="1" height="1"/>
<rect x="892" y="763" width="3" height="4"/><rect x="893" y="762" width="1" height="1"/>
<rect x="1141" y="763" width="3" height="4"/><rect x="1142" y="762" width="1" height="1"/>
<rect x="1153" y="763" width="3" height="4"/><rect x="1154" y="762" width="1" height="1"/>
</g>
<g fill="#808080" shape-rendering="crispEdges">
<rect x="150" y="47" width="2" height="722"/>
<rect x="1320" y="47" width="2" height="722"/>
<rect x="150" y="47" width="1172" height="2"/>
<rect x="150" y="768" width="1172" height="1"/>
</g>
<rect x="152" y="767" width="1168" height="1" fill="#00e0ff" shape-rendering="crispEdges"/>
<text transform="scale(0.889,1)" x="11.70" y="798" font-size="12.375" font-family="Liberation Sans, Arial, sans-serif" fill="#000" stroke="#000" stroke-width="0.18">09:13</text>
<g fill="#ffff00" shape-rendering="crispEdges"><rect x="43" y="791" width="3" height="1"/><rect x="41" y="792" width="7" height="2"/><rect x="40" y="794" width="9" height="3"/></g>
<rect x="518" y="764" width="2" height="13" fill="#ffff00" shape-rendering="crispEdges"/>
<text transform="scale(0.889,1)" x="546.34" y="798" font-size="12.375" font-family="Liberation Sans, Arial, sans-serif" fill="#000" stroke="#000" stroke-width="0.18">07:33</text>
<circle cx="519" cy="794" r="3.1" fill="#ffff00"/>
<g stroke="#ffff70" stroke-width="1" opacity="0.8"><line x1="513.5" y1="794" x2="524.5" y2="794"/><line x1="519" y1="788.5" x2="519" y2="799.5"/><line x1="515" y1="790" x2="523" y2="798"/><line x1="515" y1="798" x2="523" y2="790"/></g>
<rect x="770" y="764" width="2" height="13" fill="#808080" shape-rendering="crispEdges"/>
<text transform="scale(0.889,1)" x="874.80" y="798" font-size="12.375" font-family="Liberation Sans, Arial, sans-serif" fill="#000" stroke="#000" stroke-width="0.18">12:42</text>
<path d="M768 788 h3 v3 h2 l-3.5 5.5 l-3.5 -5.5 h2 z" fill="#ffff00"/>
<path d="M768.5 796.5 l3 -3" stroke="#000" stroke-width="1"/>
<path d="M771 795.5 h5.5 v3" stroke="#4040c0" stroke-width="1" stroke-dasharray="1 1" fill="none"/>
<rect x="968" y="764" width="2" height="13" fill="#ffff00" shape-rendering="crispEdges"/>
<text transform="scale(0.889,1)" x="1051.41" y="798" font-size="12.375" font-family="Liberation Sans, Arial, sans-serif" fill="#000" stroke="#000" stroke-width="0.18">16:46</text>
<rect x="966.5" y="791.5" width="5" height="5" fill="none" stroke="#ffff40" stroke-width="1" shape-rendering="crispEdges"/>
<rect x="1127" y="764" width="2" height="13" fill="#808080" shape-rendering="crispEdges"/>
<text transform="scale(0.889,1)" x="1276.38" y="798" font-size="12.375" font-family="Liberation Sans, Arial, sans-serif" fill="#000" stroke="#000" stroke-width="0.18">20:02</text>
<path d="M1123.5 795 v-4.5 h5.5" stroke="#4040c0" stroke-width="1" stroke-dasharray="1 1" fill="none"/>
<path d="M1130.5 791 l3.5 5 h-2 v2.5 h-3 v-2.5 h-2 z" fill="#ffff00"/>
<path d="M1129.5 792.5 l-2 3" stroke="#000" stroke-width="1"/>
<rect x="1" y="800" width="1429" height="90" fill="#ff8000" shape-rendering="crispEdges"/>
<rect x="0" y="890" width="1432" height="1" fill="#a0a0a0" shape-rendering="crispEdges"/>
<rect x="0" y="891" width="1432" height="40" fill="#fff" shape-rendering="crispEdges"/>
<rect x="0" y="930" width="1432" height="1" fill="#a0a0a0" shape-rendering="crispEdges"/>
<rect x="0" y="890" width="1" height="41" fill="#a0a0a0" shape-rendering="crispEdges"/>
<rect x="1" y="893" width="86" height="36" fill="#2ee61c" shape-rendering="crispEdges"/>
<rect x="89" y="893" width="115" height="36" fill="#2ee61c" shape-rendering="crispEdges"/>
<rect x="206" y="893" width="116" height="36" fill="#2ee61c" shape-rendering="crispEdges"/>
<rect x="324" y="893" width="116" height="36" fill="#2ee61c" shape-rendering="crispEdges"/>
<rect x="442" y="893" width="116" height="36" fill="#2ee61c" shape-rendering="crispEdges"/>
<rect x="560" y="893" width="870" height="36" fill="#2ee61c" shape-rendering="crispEdges"/>
<rect x="88" y="891" width="1" height="39" fill="#a0a0a0" shape-rendering="crispEdges"/>
<rect x="205" y="891" width="1" height="39" fill="#a0a0a0" shape-rendering="crispEdges"/>
<rect x="323" y="891" width="1" height="39" fill="#a0a0a0" shape-rendering="crispEdges"/>
<rect x="441" y="891" width="1" height="39" fill="#a0a0a0" shape-rendering="crispEdges"/>
<rect x="559" y="891" width="1" height="39" fill="#a0a0a0" shape-rendering="crispEdges"/>
<rect x="87" y="800" width="1" height="89" fill="#fff" shape-rendering="crispEdges"/>
<rect x="88" y="800" width="1" height="89" fill="#b0b0c0" shape-rendering="crispEdges"/>
<rect x="204" y="800" width="1" height="89" fill="#fff" shape-rendering="crispEdges"/>
<rect x="205" y="800" width="1" height="89" fill="#b0b0c0" shape-rendering="crispEdges"/>
<rect x="322" y="800" width="1" height="89" fill="#fff" shape-rendering="crispEdges"/>
<rect x="323" y="800" width="1" height="89" fill="#b0b0c0" shape-rendering="crispEdges"/>
<rect x="440" y="800" width="1" height="89" fill="#fff" shape-rendering="crispEdges"/>
<rect x="441" y="800" width="1" height="89" fill="#b0b0c0" shape-rendering="crispEdges"/>
<rect x="558" y="800" width="1" height="89" fill="#fff" shape-rendering="crispEdges"/>
<rect x="559" y="800" width="1" height="89" fill="#b0b0c0" shape-rendering="crispEdges"/>
<rect x="676" y="800" width="1" height="89" fill="#fff" shape-rendering="crispEdges"/>
<rect x="677" y="800" width="1" height="89" fill="#b0b0c0" shape-rendering="crispEdges"/>
<rect x="794" y="800" width="1" height="89" fill="#fff" shape-rendering="crispEdges"/>
<rect x="795" y="800" width="1" height="89" fill="#b0b0c0" shape-rendering="crispEdges"/>
<rect x="912" y="800" width="1" height="89" fill="#fff" shape-rendering="crispEdges"/>
<rect x="913" y="800" width="1" height="89" fill="#b0b0c0" shape-rendering="crispEdges"/>
<g font-family="Liberation Sans, Arial, sans-serif" font-size="11" fill="#000">
<text x="8" y="818" font-weight="bold" font-size="11.4" letter-spacing="0.1" textLength="39" lengthAdjust="spacingAndGlyphs">Sensor</text>
<text x="8" y="834" font-weight="bold" font-size="11.4" letter-spacing="0.1" textLength="47.5" lengthAdjust="spacingAndGlyphs">MinWert</text>
<text x="8" y="850" font-weight="bold" font-size="11.4" letter-spacing="0.1" textLength="51.5" lengthAdjust="spacingAndGlyphs">MaxWert</text>
<text x="8" y="866" font-weight="bold" font-size="11.4" letter-spacing="0.1" textLength="72" lengthAdjust="spacingAndGlyphs">Durchschnitt</text>
<text x="8" y="882" font-weight="bold" font-size="11.4" letter-spacing="0.1" textLength="68" lengthAdjust="spacingAndGlyphs">09.11. 23:59</text>
<text x="94.5" y="818" font-weight="bold" font-size="11.4" letter-spacing="0.1" textLength="56.2" lengthAdjust="spacingAndGlyphs">Temp. 2m</text>
<text x="199.8" y="818" text-anchor="end" font-weight="bold" font-size="11.4" letter-spacing="0.1">°C</text>
<text x="114.5" y="834" text-anchor="middle">03:37</text>
<text x="199.0" y="834" text-anchor="end">7.2</text>
<text x="114.5" y="850" text-anchor="middle">12:19</text>
<text x="199.0" y="850" text-anchor="end">9.2</text>
<text x="199.0" y="866" text-anchor="end">8.16</text>
<text x="95.0" y="882">F: 92 %</text>
<text x="199.8" y="882" text-anchor="end" font-weight="bold" font-size="11.4" letter-spacing="0.1">7.5</text>
<text x="212" y="818" font-weight="bold" font-size="11.4" letter-spacing="0.1" textLength="61.5" lengthAdjust="spacingAndGlyphs">Temp. 5cm</text>
<text x="317.3" y="818" text-anchor="end" font-weight="bold" font-size="11.4" letter-spacing="0.1">°C</text>
<text x="232" y="834" text-anchor="middle">03:28</text>
<text x="316.5" y="834" text-anchor="end">6.7</text>
<text x="232" y="850" text-anchor="middle">10:01</text>
<text x="316.5" y="850" text-anchor="end">9.4</text>
<text x="316.5" y="866" text-anchor="end">8.03</text>
<text x="317.3" y="882" text-anchor="end" font-weight="bold" font-size="11.4" letter-spacing="0.1">7.2</text>
<text x="329.5" y="818" font-weight="bold" font-size="11.4" letter-spacing="0.1" textLength="59" lengthAdjust="spacingAndGlyphs">Feuchte A.</text>
<text x="434.8" y="818" text-anchor="end" font-weight="bold" font-size="11.4" letter-spacing="0.1">%</text>
<text x="349.5" y="834" text-anchor="middle">12:58</text>
<text x="434.0" y="834" text-anchor="end">90</text>
<text x="349.5" y="850" text-anchor="middle">05:34</text>
<text x="434.0" y="850" text-anchor="end">94</text>
<text x="434.0" y="866" text-anchor="end">92</text>
<text x="330.0" y="882">7.37 g/m³</text>
<text x="434.8" y="882" text-anchor="end" font-weight="bold" font-size="11.4" letter-spacing="0.1">92</text>
<text x="447.5" y="818" font-weight="bold" font-size="11.4" letter-spacing="0.1" textLength="36" lengthAdjust="spacingAndGlyphs">Regen</text>
<text x="552.8" y="818" text-anchor="end" font-weight="bold" font-size="11.4" letter-spacing="0.1">l/m²</text>
<text x="467.5" y="850" text-anchor="middle">05:21</text>
<text x="552.0" y="850" text-anchor="end">0.2</text>
<text x="448.0" y="866">Gesamt:</text>
<text x="552.0" y="866" text-anchor="end">3.6</text>
<text x="451.5" y="882">3.6 l/m²</text>
<text x="552.8" y="882" text-anchor="end" font-weight="bold" font-size="11.4" letter-spacing="0.1">0.0</text>
<text x="565.5" y="818" font-weight="bold" font-size="11.4" letter-spacing="0.1" textLength="54" lengthAdjust="spacingAndGlyphs">Luftdruck</text>
<text x="670.8" y="818" text-anchor="end" font-weight="bold" font-size="11.4" letter-spacing="0.1">hPa</text>
<text x="585.5" y="834" text-anchor="middle">03:23</text>
<text x="670.0" y="834" text-anchor="end">1015.1</text>
<text x="585.5" y="850" text-anchor="middle">21:28</text>
<text x="670.0" y="850" text-anchor="end">1017.4</text>
<text x="566.0" y="866">^0.7hPa/h</text>
<text x="670.0" y="866" text-anchor="end">1016.2</text>
<text x="566.0" y="882">sonnig</text>
<text x="670.8" y="882" text-anchor="end" font-weight="bold" font-size="11.4" letter-spacing="0.1">1016.9</text>
<text x="683.5" y="818" font-weight="bold" font-size="11.4" letter-spacing="0.1" textLength="77.2" lengthAdjust="spacingAndGlyphs">Sonnenschein</text>
<text x="788.8" y="818" text-anchor="end" font-weight="bold" font-size="11.4" letter-spacing="0.1">min</text>
<text x="703.5" y="850" text-anchor="middle">00:00</text>
<text x="788.0" y="850" text-anchor="end">0</text>
<text x="684.0" y="866">0 min.</text>
<text x="788.0" y="866" text-anchor="end">0</text>
<text x="788.8" y="882" text-anchor="end" font-weight="bold" font-size="11.4" letter-spacing="0.1">0</text>
<text x="801.5" y="818" font-weight="bold" font-size="11.4" letter-spacing="0.1" textLength="55.4" lengthAdjust="spacingAndGlyphs">Windböen</text>
<text x="906.8" y="818" text-anchor="end" font-weight="bold" font-size="11.4" letter-spacing="0.1">km/h</text>
<text x="802.0" y="834">Ø 10 min.</text>
<text x="906.0" y="834" text-anchor="end">0.8</text>
<text x="821.5" y="850" text-anchor="middle">12:42</text>
<text x="906.0" y="850" text-anchor="end">SO 22.7</text>
<text x="808.8" y="866">21.7 km</text>
<text x="906.0" y="866" text-anchor="end">0.9</text>
<text x="808.8" y="882">0 Bft N</text>
<text x="906.8" y="882" text-anchor="end" font-weight="bold" font-size="11.4" letter-spacing="0.1">0.0</text>
<text x="919.5" y="818" font-weight="bold" font-size="11.4" letter-spacing="0.1" textLength="27.8" lengthAdjust="spacingAndGlyphs">Wind</text>
<text x="1021.8" y="818" text-anchor="end" font-weight="bold" font-size="11.4" letter-spacing="0.1">km/h</text>
<text x="920.0" y="834">Ø 10 min.</text>
<text x="1021.0" y="834" text-anchor="end">0.0</text>
<text x="939.5" y="850" text-anchor="middle">12:45</text>
<text x="1021.0" y="850" text-anchor="end">S-SO 6.5</text>
<text x="926.8" y="866">21.7 km</text>
<text x="1021.0" y="866" text-anchor="end">0.4</text>
<text x="926.8" y="882">0 Bft S</text>
<text x="1021.8" y="882" text-anchor="end" font-weight="bold" font-size="11.4" letter-spacing="0.1">0.0</text>
<text x="7.7" y="907">Wetterdaten</text>
<text x="7.7" y="923">09.11.25 23:59</text>
<text x="94" y="907">Temp. I.</text>
<text x="198.3" y="907" text-anchor="end">19.8 °C</text>
<text x="94" y="923">Feuchte I.</text>
<text x="198.3" y="923" text-anchor="end">51 %</text>
<text x="210.3" y="907">Temp. 2m</text>
<text x="314.3" y="907" text-anchor="end">7.5 °C</text>
<text x="210.3" y="923">Feuchte A.</text>
<text x="314.3" y="923" text-anchor="end">92 %</text>
<text x="329.6" y="907">Luftdruck</text>
<text x="434.5" y="907" text-anchor="end" textLength="53.5" lengthAdjust="spacingAndGlyphs">1016.9 hPa</text>
<text x="329.6" y="923">Regen</text>
<text x="434.5" y="923" text-anchor="end">0.0 l/m²</text>
<text x="447.7" y="907">Wind</text>
<text x="552" y="907" text-anchor="end">0.0 km/h</text>
<text x="447.7" y="923">Richtung</text>
<text x="552" y="923" text-anchor="end">S</text>
<text x="1099.6" y="907">WR</text>
<text x="1120.4" y="907">169°</text>
<text x="1169.5" y="907">Solar</text>
<text x="1285.5" y="907" text-anchor="end">0 W/m²</text>
<text x="1309.3" y="907">UV</text>
<text x="1425.5" y="907" text-anchor="end">0.0 UV-I</text>
<text x="1099.6" y="923">WC</text>
<text x="1120.4" y="923">7.5°C</text>
<text x="1169.5" y="923">ET</text>
<text x="1276.3" y="923" text-anchor="end">0.000 mm</text>
<text x="1309.3" y="923">Taupunkt</text>
<text x="1386" y="923">6.3 °C</text>
</g>
<defs><linearGradient id="sky" x1="0" y1="0" x2="1" y2="1"><stop offset="0" stop-color="#4488c4"/><stop offset="0.6" stop-color="#549cd2"/><stop offset="1" stop-color="#7ab8e8"/></linearGradient></defs>
<rect x="562" y="894" width="34" height="34" fill="url(#sky)"/>
<rect x="562" y="894" width="34" height="1" fill="#000030"/><rect x="562" y="894" width="1" height="34" fill="#000030"/>
<polygon points="579.7,898.6 582.2,905.6 587.5,903.8 585.7,909.1 592.7,911.6 585.7,914.1 587.5,919.4 582.2,917.6 579.7,924.6 577.2,917.6 571.9,919.4 573.7,914.1 566.7,911.6 573.7,909.1 571.9,903.8 577.2,905.6" fill="#e8ec30" opacity="0.8"/>
<circle cx="579.7" cy="911.6" r="7.6" fill="#f0f020"/>
</g>
</svg>
</body></html>
